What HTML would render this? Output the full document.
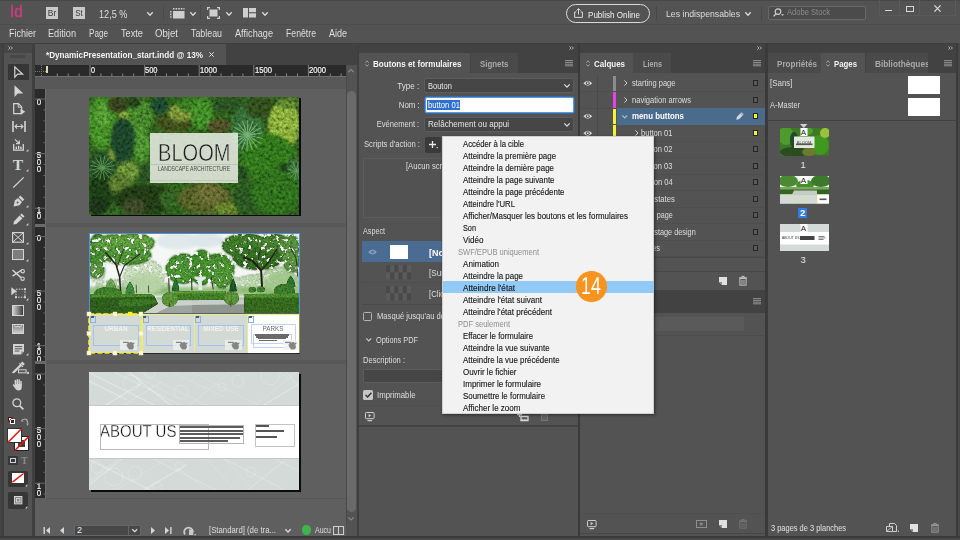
<!DOCTYPE html><html lang="fr"><head><meta charset="utf-8"><title>InDesign</title><style>
html,body{margin:0;padding:0;}
body{width:960px;height:540px;overflow:hidden;background:#535353;position:relative;font-family:"Liberation Sans",sans-serif;}
.a{position:absolute;display:block;box-sizing:border-box;}
.t{white-space:pre;}
svg{overflow:visible;}
</style></head><body>
<div class="a" style="left:0px;top:0px;width:960px;height:540px;background:#535353;"></div>
<div class="a" style="left:0px;top:0px;width:960px;height:1px;background:#474747;"></div>
<div class="a" style="left:0px;top:24px;width:960px;height:1px;background:#4c4c4c;"></div>
<span class="a t" style="top:0.80px;font-size:16px;line-height:22px;color:#d13c7e;transform:scaleX(0.959);transform-origin:left center;left:10.2px;-webkit-text-stroke:0.35px #d13c7e;">Id</span>
<div class="a" style="left:46px;top:7px;width:12px;height:12px;background:#c9c9c9;"></div>
<div class="a t" style="top:7.20px;font-size:8.8px;line-height:12px;color:#3a3a3a;transform:scaleX(0.966);transform-origin:center center;left:-148px;width:400px;text-align:center;"><span>Br</span></div>
<div class="a" style="left:73px;top:7px;width:12px;height:12px;background:#c9c9c9;"></div>
<div class="a t" style="top:7.20px;font-size:8.8px;line-height:12px;color:#3a3a3a;transform:scaleX(0.902);transform-origin:center center;left:-121px;width:400px;text-align:center;"><span>St</span></div>
<span class="a t" style="top:6.50px;font-size:10.5px;line-height:15px;color:#dedede;transform:scaleX(0.871);transform-origin:left center;left:99px;">12,5 %</span>
<svg class="a" style="left:147px;top:11.5px;" width="6" height="3.5" viewBox="0 0 6 3.5"><path d="M0.3 0.3 L3.0 3.2 L5.7 0.3" fill="none" stroke="#dcdcdc" stroke-width="1.3"/></svg>
<div class="a" style="left:163px;top:5px;width:1px;height:15px;background:#4a4a4a;"></div>
<svg class="a" style="left:170px;top:8px;" width="15" height="11" viewBox="0 0 15 11"><rect x="3" y="3" width="11.5" height="7.5" fill="#cfcfcf"/><path d="M3 0.8H14.5" stroke="#cfcfcf" stroke-width="1.4" stroke-dasharray="1.6 1"/><path d="M0.8 3V10.5" stroke="#cfcfcf" stroke-width="1.4" stroke-dasharray="1.6 1"/></svg>
<svg class="a" style="left:190px;top:11.5px;" width="6" height="3.5" viewBox="0 0 6 3.5"><path d="M0.3 0.3 L3.0 3.2 L5.7 0.3" fill="none" stroke="#dcdcdc" stroke-width="1.3"/></svg>
<div class="a" style="left:200px;top:5px;width:1px;height:15px;background:#4a4a4a;"></div>
<svg class="a" style="left:207px;top:7px;" width="13" height="12" viewBox="0 0 13 12"><rect x="2.5" y="2.5" width="8" height="7" fill="#cfcfcf"/><path d="M0.6 3V0.6H3M10 0.6H12.4V3M12.4 9V11.4H10M3 11.4H0.6V9" fill="none" stroke="#cfcfcf" stroke-width="1.2"/></svg>
<svg class="a" style="left:226px;top:11.5px;" width="6" height="3.5" viewBox="0 0 6 3.5"><path d="M0.3 0.3 L3.0 3.2 L5.7 0.3" fill="none" stroke="#dcdcdc" stroke-width="1.3"/></svg>
<svg class="a" style="left:243px;top:8px;" width="13" height="10" viewBox="0 0 13 10"><rect x="0" y="0" width="5" height="9.5" fill="#cfcfcf"/><rect x="6" y="0" width="7" height="4.2" fill="#cfcfcf"/><rect x="6" y="5.3" width="7" height="4.2" fill="#cfcfcf"/></svg>
<svg class="a" style="left:262px;top:11.5px;" width="6" height="3.5" viewBox="0 0 6 3.5"><path d="M0.3 0.3 L3.0 3.2 L5.7 0.3" fill="none" stroke="#dcdcdc" stroke-width="1.3"/></svg>
<div class="a" style="left:566px;top:4px;width:84px;height:19px;border:1px solid #d8d8d8;border-radius:10px;"></div>
<svg class="a" style="left:574px;top:8px;" width="9" height="10" viewBox="0 0 9 10"><path d="M2.3 4H0.6V9.4H8.4V4H6.7" fill="none" stroke="#d8d8d8" stroke-width="1"/><path d="M4.5 6.5V0.8M2.5 2.6L4.5 0.6L6.5 2.6" fill="none" stroke="#d8d8d8" stroke-width="1"/></svg>
<span class="a t" style="top:7.50px;font-size:9.5px;line-height:13px;color:#f0f0f0;transform:scaleX(0.849);transform-origin:left center;left:588px;">Publish Online</span>
<div class="a" style="left:656px;top:6px;width:1px;height:14px;background:#484848;"></div>
<span class="a t" style="top:6.50px;font-size:9.5px;line-height:13px;color:#dedede;transform:scaleX(0.916);transform-origin:left center;left:665.5px;">Les indispensables</span>
<svg class="a" style="left:745px;top:12px;" width="6" height="3.5" viewBox="0 0 6 3.5"><path d="M0.3 0.3 L3.0 3.2 L5.7 0.3" fill="none" stroke="#dcdcdc" stroke-width="1.3"/></svg>
<div class="a" style="left:761px;top:6px;width:1px;height:14px;background:#484848;"></div>
<div class="a" style="left:768px;top:5.5px;width:97.5px;height:14px;background:#4b4b4b;border:1px solid #696969;border-radius:2px;"></div>
<svg class="a" style="left:773px;top:8px;" width="11" height="9" viewBox="0 0 11 9"><circle cx="5" cy="3.6" r="2.8" fill="none" stroke="#d0d0d0" stroke-width="1.2"/><path d="M3 5.8L0.6 8.4" stroke="#d0d0d0" stroke-width="1.3"/><path d="M8 6.2h3l-1.5 1.8z" fill="#d0d0d0"/></svg>
<span class="a t" style="top:6.00px;font-size:9px;line-height:13px;color:#8c8c8c;transform:scaleX(0.842);transform-origin:left center;left:787px;">Adobe Stock</span>
<div class="a" style="left:879px;top:0px;width:1px;height:15px;background:#5a5a5a;"></div>
<div class="a" style="left:899px;top:0px;width:1px;height:15px;background:#5a5a5a;"></div>
<div class="a" style="left:919px;top:0px;width:1px;height:15px;background:#5a5a5a;"></div>
<div class="a" style="left:955px;top:0px;width:1px;height:15px;background:#5a5a5a;"></div>
<div class="a" style="left:879px;top:15px;width:77px;height:1px;background:#5a5a5a;"></div>
<div class="a" style="left:885px;top:9.5px;width:7px;height:1.6px;background:#d8d8d8;"></div>
<div class="a" style="left:905.5px;top:5.5px;width:8px;height:6px;border:1.4px solid #d8d8d8;"></div>
<svg class="a" style="left:934px;top:5px;" width="7" height="7" viewBox="0 0 7 7"><path d="M0.4 0.4L6.6 6.6M6.6 0.4L0.4 6.6" stroke="#d8d8d8" stroke-width="1.3"/></svg>
<span class="a t" style="top:27.00px;font-size:10px;line-height:14px;color:#dedede;transform:scaleX(0.900);transform-origin:left center;left:9px;">Fichier</span>
<span class="a t" style="top:27.00px;font-size:10px;line-height:14px;color:#dedede;transform:scaleX(0.916);transform-origin:left center;left:48px;">Edition</span>
<span class="a t" style="top:27.00px;font-size:10px;line-height:14px;color:#dedede;transform:scaleX(0.813);transform-origin:left center;left:89px;">Page</span>
<span class="a t" style="top:27.00px;font-size:10px;line-height:14px;color:#dedede;transform:scaleX(0.920);transform-origin:left center;left:121px;">Texte</span>
<span class="a t" style="top:27.00px;font-size:10px;line-height:14px;color:#dedede;transform:scaleX(0.962);transform-origin:left center;left:155px;">Objet</span>
<span class="a t" style="top:27.00px;font-size:10px;line-height:14px;color:#dedede;transform:scaleX(0.885);transform-origin:left center;left:191px;">Tableau</span>
<span class="a t" style="top:27.00px;font-size:10px;line-height:14px;color:#dedede;transform:scaleX(0.915);transform-origin:left center;left:235px;">Affichage</span>
<span class="a t" style="top:27.00px;font-size:10px;line-height:14px;color:#dedede;transform:scaleX(0.870);transform-origin:left center;left:286px;">Fenêtre</span>
<span class="a t" style="top:27.00px;font-size:10px;line-height:14px;color:#dedede;transform:scaleX(0.899);transform-origin:left center;left:329px;">Aide</span>
<div class="a" style="left:0px;top:43px;width:960px;height:497px;background:#3f3f3f;"></div>
<div class="a" style="left:0px;top:43px;width:2px;height:497px;background:#444;"></div>
<div class="a" style="left:35px;top:44px;width:321.5px;height:21px;background:#424242;"></div>
<div class="a" style="left:35px;top:44px;width:191px;height:21px;background:#535353;"></div>
<span class="a t" style="top:48.00px;font-size:9.5px;line-height:13px;color:#f2f2f2;font-weight:700;transform:scaleX(0.858);transform-origin:left center;left:46px;">*DynamicPresentation_start.indd @ 13%</span>
<svg class="a" style="left:208.5px;top:51.5px;" width="5" height="5" viewBox="0 0 5 5"><path d="M0.3 0.3L4.7 4.7M4.7 0.3L0.3 4.7" stroke="#e0e0e0" stroke-width="1"/></svg>
<div class="a" style="left:35px;top:65px;width:321.5px;height:472px;background:#5f5f5f;"></div>
<div class="a" style="left:35px;top:77px;width:311px;height:11.5px;background:#585858;"></div>
<div class="a" style="left:35px;top:65px;width:311px;height:12px;background:#2a2a2a;"></div>
<div class="a" style="left:35px;top:76px;width:311px;height:1px;background:#6e6e6e;"></div>
<div class="a" style="left:35px;top:70.5px;width:11px;height:1px;border-top:1px dotted #777;"></div>
<div class="a" style="left:40.5px;top:65px;width:1px;height:11px;border-left:1px dotted #777;"></div>
<div class="a" style="left:46px;top:66px;width:1.5px;height:7px;background:#e6d7ae;"></div>
<svg class="a" style="left:35px;top:65px;" width="311" height="12" viewBox="0 0 311 12"><rect x="21.74" y="8.5" width="1" height="2.5" fill="#8a8a8a"/><rect x="32.66" y="8.5" width="1" height="2.5" fill="#8a8a8a"/><rect x="43.58" y="8.5" width="1" height="2.5" fill="#8a8a8a"/><rect x="54.50" y="0" width="1" height="11" fill="#7d7d7d"/><rect x="65.42" y="8.5" width="1" height="2.5" fill="#8a8a8a"/><rect x="76.34" y="8.5" width="1" height="2.5" fill="#8a8a8a"/><rect x="87.26" y="8.5" width="1" height="2.5" fill="#8a8a8a"/><rect x="98.18" y="8.5" width="1" height="2.5" fill="#8a8a8a"/><rect x="109.10" y="0" width="1" height="11" fill="#7d7d7d"/><rect x="120.02" y="8.5" width="1" height="2.5" fill="#8a8a8a"/><rect x="130.94" y="8.5" width="1" height="2.5" fill="#8a8a8a"/><rect x="141.86" y="8.5" width="1" height="2.5" fill="#8a8a8a"/><rect x="152.78" y="8.5" width="1" height="2.5" fill="#8a8a8a"/><rect x="163.70" y="0" width="1" height="11" fill="#7d7d7d"/><rect x="174.62" y="8.5" width="1" height="2.5" fill="#8a8a8a"/><rect x="185.54" y="8.5" width="1" height="2.5" fill="#8a8a8a"/><rect x="196.46" y="8.5" width="1" height="2.5" fill="#8a8a8a"/><rect x="207.38" y="8.5" width="1" height="2.5" fill="#8a8a8a"/><rect x="218.30" y="0" width="1" height="11" fill="#7d7d7d"/><rect x="229.22" y="8.5" width="1" height="2.5" fill="#8a8a8a"/><rect x="240.14" y="8.5" width="1" height="2.5" fill="#8a8a8a"/><rect x="251.06" y="8.5" width="1" height="2.5" fill="#8a8a8a"/><rect x="261.98" y="8.5" width="1" height="2.5" fill="#8a8a8a"/><rect x="272.90" y="0" width="1" height="11" fill="#7d7d7d"/><rect x="283.82" y="8.5" width="1" height="2.5" fill="#8a8a8a"/><rect x="294.74" y="8.5" width="1" height="2.5" fill="#8a8a8a"/><rect x="305.66" y="8.5" width="1" height="2.5" fill="#8a8a8a"/></svg>
<span class="a t" style="top:64.20px;font-size:8.6px;line-height:12px;color:#f6f6f6;transform:scaleX(0.837);transform-origin:left center;left:90.8px;-webkit-text-stroke:0.2px #f6f6f6;">0</span>
<span class="a t" style="top:64.20px;font-size:8.6px;line-height:12px;color:#f6f6f6;transform:scaleX(0.871);transform-origin:left center;left:145.4px;-webkit-text-stroke:0.2px #f6f6f6;">500</span>
<span class="a t" style="top:64.20px;font-size:8.6px;line-height:12px;color:#f6f6f6;transform:scaleX(0.889);transform-origin:left center;left:200.0px;-webkit-text-stroke:0.2px #f6f6f6;">1000</span>
<span class="a t" style="top:64.20px;font-size:8.6px;line-height:12px;color:#f6f6f6;transform:scaleX(0.889);transform-origin:left center;left:254.60000000000002px;-webkit-text-stroke:0.2px #f6f6f6;">1500</span>
<span class="a t" style="top:64.20px;font-size:8.6px;line-height:12px;color:#f6f6f6;transform:scaleX(0.889);transform-origin:left center;left:309.2px;-webkit-text-stroke:0.2px #f6f6f6;">2000</span>
<div class="a" style="left:346px;top:65px;width:10.5px;height:472px;background:#535353;"></div>
<div class="a" style="left:346px;top:65px;width:1px;height:460px;background:#4a4a4a;"></div>
<svg class="a" style="left:348.3px;top:69px;" width="6" height="3.5" viewBox="0 0 6 3.5"><path d="M0.3 3.2L3 0.5L5.7 3.2" fill="none" stroke="#8a8a8a" stroke-width="1.2"/></svg>
<div class="a" style="left:347px;top:91px;width:8.7px;height:421px;background:#6a6a6a;border-radius:4.5px;"></div>
<svg class="a" style="left:348.3px;top:517px;" width="6" height="3.5" viewBox="0 0 6 3.5"><path d="M0.3 0.3L3 3L5.7 0.3" fill="none" stroke="#8a8a8a" stroke-width="1.2"/></svg>
<div class="a" style="left:35px;top:89px;width:11px;height:135px;background:#2a2a2a;"></div>
<div class="a" style="left:45px;top:89px;width:1px;height:135px;background:#6e6e6e;"></div>
<div class="a t" style="top:97.50px;font-size:8.8px;line-height:8px;color:#f6f6f6;transform:scaleX(0.897);transform-origin:center center;left:-161.2px;width:400px;text-align:center;-webkit-text-stroke:0.2px #f6f6f6;"><span>0</span></div>
<div class="a t" style="top:151.00px;font-size:8.8px;line-height:8px;color:#f6f6f6;transform:scaleX(0.897);transform-origin:center center;left:-161.2px;width:400px;text-align:center;-webkit-text-stroke:0.2px #f6f6f6;"><span>5</span></div>
<div class="a t" style="top:157.80px;font-size:8.8px;line-height:8px;color:#f6f6f6;transform:scaleX(0.897);transform-origin:center center;left:-161.2px;width:400px;text-align:center;-webkit-text-stroke:0.2px #f6f6f6;"><span>0</span></div>
<div class="a t" style="top:164.60px;font-size:8.8px;line-height:8px;color:#f6f6f6;transform:scaleX(0.897);transform-origin:center center;left:-161.2px;width:400px;text-align:center;-webkit-text-stroke:0.2px #f6f6f6;"><span>0</span></div>
<div class="a t" style="top:205.50px;font-size:8.8px;line-height:8px;color:#f6f6f6;transform:scaleX(0.897);transform-origin:center center;left:-161.2px;width:400px;text-align:center;-webkit-text-stroke:0.2px #f6f6f6;"><span>1</span></div>
<div class="a t" style="top:212.30px;font-size:8.8px;line-height:8px;color:#f6f6f6;transform:scaleX(0.897);transform-origin:center center;left:-161.2px;width:400px;text-align:center;-webkit-text-stroke:0.2px #f6f6f6;"><span>0</span></div>
<div class="a" style="left:35px;top:226.5px;width:11px;height:134.5px;background:#2a2a2a;"></div>
<div class="a" style="left:45px;top:226.5px;width:1px;height:134.5px;background:#6e6e6e;"></div>
<div class="a t" style="top:234.00px;font-size:8.8px;line-height:8px;color:#f6f6f6;transform:scaleX(0.897);transform-origin:center center;left:-161.2px;width:400px;text-align:center;-webkit-text-stroke:0.2px #f6f6f6;"><span>0</span></div>
<div class="a t" style="top:289.00px;font-size:8.8px;line-height:8px;color:#f6f6f6;transform:scaleX(0.897);transform-origin:center center;left:-161.2px;width:400px;text-align:center;-webkit-text-stroke:0.2px #f6f6f6;"><span>5</span></div>
<div class="a t" style="top:295.80px;font-size:8.8px;line-height:8px;color:#f6f6f6;transform:scaleX(0.897);transform-origin:center center;left:-161.2px;width:400px;text-align:center;-webkit-text-stroke:0.2px #f6f6f6;"><span>0</span></div>
<div class="a t" style="top:302.60px;font-size:8.8px;line-height:8px;color:#f6f6f6;transform:scaleX(0.897);transform-origin:center center;left:-161.2px;width:400px;text-align:center;-webkit-text-stroke:0.2px #f6f6f6;"><span>0</span></div>
<div class="a t" style="top:341.50px;font-size:8.8px;line-height:8px;color:#f6f6f6;transform:scaleX(0.897);transform-origin:center center;left:-161.2px;width:400px;text-align:center;-webkit-text-stroke:0.2px #f6f6f6;"><span>1</span></div>
<div class="a t" style="top:348.30px;font-size:8.8px;line-height:8px;color:#f6f6f6;transform:scaleX(0.897);transform-origin:center center;left:-161.2px;width:400px;text-align:center;-webkit-text-stroke:0.2px #f6f6f6;"><span>0</span></div>
<div class="a t" style="top:355.10px;font-size:8.8px;line-height:8px;color:#f6f6f6;transform:scaleX(0.897);transform-origin:center center;left:-161.2px;width:400px;text-align:center;-webkit-text-stroke:0.2px #f6f6f6;"><span>0</span></div>
<div class="a" style="left:35px;top:363.5px;width:11px;height:134.5px;background:#2a2a2a;"></div>
<div class="a" style="left:45px;top:363.5px;width:1px;height:134.5px;background:#6e6e6e;"></div>
<div class="a t" style="top:373.00px;font-size:8.8px;line-height:8px;color:#f6f6f6;transform:scaleX(0.897);transform-origin:center center;left:-161.2px;width:400px;text-align:center;-webkit-text-stroke:0.2px #f6f6f6;"><span>0</span></div>
<div class="a t" style="top:426.00px;font-size:8.8px;line-height:8px;color:#f6f6f6;transform:scaleX(0.897);transform-origin:center center;left:-161.2px;width:400px;text-align:center;-webkit-text-stroke:0.2px #f6f6f6;"><span>5</span></div>
<div class="a t" style="top:432.80px;font-size:8.8px;line-height:8px;color:#f6f6f6;transform:scaleX(0.897);transform-origin:center center;left:-161.2px;width:400px;text-align:center;-webkit-text-stroke:0.2px #f6f6f6;"><span>0</span></div>
<div class="a t" style="top:439.60px;font-size:8.8px;line-height:8px;color:#f6f6f6;transform:scaleX(0.897);transform-origin:center center;left:-161.2px;width:400px;text-align:center;-webkit-text-stroke:0.2px #f6f6f6;"><span>0</span></div>
<div class="a t" style="top:481.70px;font-size:8.8px;line-height:8px;color:#f6f6f6;transform:scaleX(0.897);transform-origin:center center;left:-161.2px;width:400px;text-align:center;-webkit-text-stroke:0.2px #f6f6f6;"><span>1</span></div>
<div class="a t" style="top:488.50px;font-size:8.8px;line-height:8px;color:#f6f6f6;transform:scaleX(0.897);transform-origin:center center;left:-161.2px;width:400px;text-align:center;-webkit-text-stroke:0.2px #f6f6f6;"><span>0</span></div>
<svg class="a" style="left:35px;top:65px;" width="11" height="440" viewBox="0 0 11 440"><rect x="0" y="33.50" width="11" height="1" fill="#6a6a6a"/><rect x="8.5" y="44.42" width="2.5" height="1" fill="#6a6a6a"/><rect x="8.5" y="55.34" width="2.5" height="1" fill="#6a6a6a"/><rect x="8.5" y="66.26" width="2.5" height="1" fill="#6a6a6a"/><rect x="8.5" y="77.18" width="2.5" height="1" fill="#6a6a6a"/><rect x="0" y="88.10" width="11" height="1" fill="#6a6a6a"/><rect x="8.5" y="99.02" width="2.5" height="1" fill="#6a6a6a"/><rect x="8.5" y="109.94" width="2.5" height="1" fill="#6a6a6a"/><rect x="8.5" y="120.86" width="2.5" height="1" fill="#6a6a6a"/><rect x="8.5" y="131.78" width="2.5" height="1" fill="#6a6a6a"/><rect x="0" y="142.70" width="11" height="1" fill="#6a6a6a"/><rect x="8.5" y="153.62" width="2.5" height="1" fill="#6a6a6a"/><rect x="0" y="171.00" width="11" height="1" fill="#6a6a6a"/><rect x="8.5" y="181.92" width="2.5" height="1" fill="#6a6a6a"/><rect x="8.5" y="192.84" width="2.5" height="1" fill="#6a6a6a"/><rect x="8.5" y="203.76" width="2.5" height="1" fill="#6a6a6a"/><rect x="8.5" y="214.68" width="2.5" height="1" fill="#6a6a6a"/><rect x="0" y="225.60" width="11" height="1" fill="#6a6a6a"/><rect x="8.5" y="236.52" width="2.5" height="1" fill="#6a6a6a"/><rect x="8.5" y="247.44" width="2.5" height="1" fill="#6a6a6a"/><rect x="8.5" y="258.36" width="2.5" height="1" fill="#6a6a6a"/><rect x="8.5" y="269.28" width="2.5" height="1" fill="#6a6a6a"/><rect x="0" y="280.20" width="11" height="1" fill="#6a6a6a"/><rect x="8.5" y="291.12" width="2.5" height="1" fill="#6a6a6a"/><rect x="0" y="308.50" width="11" height="1" fill="#6a6a6a"/><rect x="8.5" y="319.42" width="2.5" height="1" fill="#6a6a6a"/><rect x="8.5" y="330.34" width="2.5" height="1" fill="#6a6a6a"/><rect x="8.5" y="341.26" width="2.5" height="1" fill="#6a6a6a"/><rect x="8.5" y="352.18" width="2.5" height="1" fill="#6a6a6a"/><rect x="0" y="363.10" width="11" height="1" fill="#6a6a6a"/><rect x="8.5" y="374.02" width="2.5" height="1" fill="#6a6a6a"/><rect x="8.5" y="384.94" width="2.5" height="1" fill="#6a6a6a"/><rect x="8.5" y="395.86" width="2.5" height="1" fill="#6a6a6a"/><rect x="8.5" y="406.78" width="2.5" height="1" fill="#6a6a6a"/><rect x="0" y="417.70" width="11" height="1" fill="#6a6a6a"/><rect x="8.5" y="428.62" width="2.5" height="1" fill="#6a6a6a"/></svg>
<div class="a" style="left:46px;top:223px;width:300px;height:3.5px;background:#585858;"></div>
<div class="a" style="left:46px;top:360px;width:300px;height:3.5px;background:#585858;"></div>
<div class="a" style="left:35px;top:224px;width:11px;height:2.5px;background:#6a6a6a;"></div>
<div class="a" style="left:35px;top:361px;width:11px;height:2.5px;background:#6a6a6a;"></div>
<div class="a" style="left:46px;top:498px;width:300px;height:1px;background:#575757;"></div>
<svg class="a" style="left:45.5px;top:526.5px;" width="4" height="7" viewBox="0 0 4 7"><path d="M4 0L0 3.5L4 7Z" fill="#d6d6d6"/><rect x="-2.5" y="0" width="1.4" height="7" fill="#d6d6d6"/></svg>
<svg class="a" style="left:60px;top:526.5px;" width="4" height="7" viewBox="0 0 4 7"><path d="M4 0L0 3.5L4 7Z" fill="#d6d6d6"/></svg>
<div class="a" style="left:73.5px;top:525px;width:67px;height:11px;background:#484848;border:1px solid #666;"></div>
<div class="a" style="left:128px;top:525px;width:1px;height:11px;background:#666;"></div>
<span class="a t" style="top:524.00px;font-size:9px;line-height:13px;color:#efefef;left:77px;">2</span>
<svg class="a" style="left:131.5px;top:529px;" width="5.5" height="3" viewBox="0 0 5.5 3"><path d="M0.3 0.3 L2.75 2.7 L5.2 0.3" fill="none" stroke="#dcdcdc" stroke-width="1.3"/></svg>
<svg class="a" style="left:151px;top:526.5px;" width="4" height="7" viewBox="0 0 4 7"><path d="M0 0L4 3.5L0 7Z" fill="#d6d6d6"/></svg>
<svg class="a" style="left:164.5px;top:526.5px;" width="4" height="7" viewBox="0 0 4 7"><path d="M0 0L4 3.5L0 7Z" fill="#d6d6d6"/><rect x="5.2" y="0" width="1.4" height="7" fill="#d6d6d6"/></svg>
<svg class="a" style="left:184px;top:525.5px;" width="12" height="10" viewBox="0 0 12 10"><path d="M1 8.5A4.3 4.3 0 1 1 8.8 6" fill="none" stroke="#c9c9c9" stroke-width="1.8"/><rect x="5" y="3.5" width="4.3" height="5.5" fill="#c9c9c9"/><rect x="10.5" y="8" width="1.3" height="1.3" fill="#c9c9c9"/></svg>
<span class="a t" style="top:524.00px;font-size:9.3px;line-height:13px;color:#dedede;transform:scaleX(0.836);transform-origin:left center;left:208.5px;">[Standard] (de tra...</span>
<svg class="a" style="left:285px;top:528.5px;" width="6" height="3.3" viewBox="0 0 6 3.3"><path d="M0.3 0.3 L3.0 3.0 L5.7 0.3" fill="none" stroke="#dcdcdc" stroke-width="1.3"/></svg>
<div class="a" style="left:302px;top:525.3px;width:9.4px;height:9.4px;background:#3fb54a;border-radius:50%;"></div>
<span class="a t" style="top:524.00px;font-size:9.3px;line-height:13px;color:#dedede;transform:scaleX(0.755);transform-origin:left center;left:315px;">Aucu</span>
<div class="a" style="left:332.5px;top:526px;width:11px;height:9px;border:1px solid #cfcfcf;"></div>
<div class="a" style="left:337.5px;top:526px;width:1px;height:9px;background:#cfcfcf;"></div>
<div class="a" style="left:90.6px;top:98.2px;width:210px;height:118px;background:#0a0a0a;"></div>
<svg class="a" style="left:89px;top:96.5px;overflow:hidden;" width="210" height="118" viewBox="0 0 210 118"><defs><filter id="fol" filterUnits="userSpaceOnUse" x="-12" y="-12" width="234" height="142"><feGaussianBlur in="SourceGraphic" stdDeviation="1.7" result="b"/><feTurbulence type="fractalNoise" baseFrequency="0.33" numOctaves="3" seed="7" result="n"/><feColorMatrix in="n" type="matrix" values="1.5 0 0 0 -0.25  1.5 0 0 0 -0.25  1.5 0 0 0 -0.25  0 0 0 0 1" result="g"/><feComposite in="b" in2="g" operator="arithmetic" k1="1.5" k2="0.3" k3="0" k4="0"/></filter></defs><g filter="url(#fol)"><rect x="-12" y="-12" width="234" height="142" fill="#2f5f1e"/><ellipse cx="13.3" cy="26.0" rx="14.7" ry="26.9" fill="#438b26"/><ellipse cx="14.1" cy="18.7" rx="7.3" ry="11.4" fill="#529930"/><ellipse cx="28.4" cy="8.1" rx="10.2" ry="8.1" fill="#353f1f"/><ellipse cx="35.5" cy="43.1" rx="9.1" ry="21.2" fill="#1c442a"/><ellipse cx="50.8" cy="19.1" rx="13.0" ry="16.7" fill="#44842a"/><ellipse cx="34.9" cy="18.7" rx="5.3" ry="4.1" fill="#7a9f37"/><ellipse cx="52.7" cy="48.4" rx="8.1" ry="18.3" fill="#4b8d2f"/><ellipse cx="70.7" cy="8.7" rx="8.6" ry="8.7" fill="#1c462f"/><ellipse cx="84.6" cy="26.0" rx="17.5" ry="9.8" fill="#414f1f"/><ellipse cx="91.5" cy="15.8" rx="12.2" ry="8.6" fill="#789135"/><ellipse cx="99.7" cy="8.1" rx="11.4" ry="7.3" fill="#387924"/><ellipse cx="13.7" cy="69.2" rx="15.1" ry="14.7" fill="#264e26"/><ellipse cx="25.1" cy="57.0" rx="5.3" ry="5.7" fill="#86a63d"/><ellipse cx="39.0" cy="74.1" rx="11.0" ry="9.8" fill="#6a9037"/><ellipse cx="55.4" cy="76.1" rx="5.9" ry="10.2" fill="#295022"/><ellipse cx="112.8" cy="16.2" rx="11.4" ry="16.3" fill="#418926"/><ellipse cx="130.3" cy="28.9" rx="11.8" ry="6.9" fill="#4e4e27"/><ellipse cx="139.7" cy="8.9" rx="17.1" ry="8.1" fill="#2b5121"/><ellipse cx="158.4" cy="33.4" rx="16.3" ry="26.1" fill="#366c34"/><ellipse cx="172.3" cy="10.9" rx="15.5" ry="11.0" fill="#334d1f"/><ellipse cx="195.1" cy="27.6" rx="15.5" ry="23.6" fill="#88aa3b"/><ellipse cx="199.2" cy="6.5" rx="11.4" ry="5.7" fill="#5d832e"/><ellipse cx="179.6" cy="61.5" rx="27.7" ry="24.9" fill="#31761e"/><ellipse cx="200.0" cy="70.8" rx="10.6" ry="4.9" fill="#193a15"/><ellipse cx="204.5" cy="73.3" rx="6.9" ry="12.2" fill="#356834"/><ellipse cx="154.3" cy="77.8" rx="4.9" ry="8.6" fill="#284c21"/><ellipse cx="11.9" cy="95.3" rx="12.6" ry="21.8" fill="#1f3e19"/><ellipse cx="45.1" cy="5.6" rx="6.5" ry="5.7" fill="#253f1f"/><ellipse cx="33.7" cy="43.1" rx="12.2" ry="22.8" fill="#1c442a"/><ellipse cx="31.4" cy="87.2" rx="11.5" ry="11.5" fill="#58782d"/><ellipse cx="56.6" cy="102.1" rx="32.1" ry="14.9" fill="#213b19"/><ellipse cx="82.9" cy="102.1" rx="12.6" ry="10.3" fill="#335e23"/><ellipse cx="116.2" cy="101.6" rx="27.5" ry="15.5" fill="#525e27"/><ellipse cx="120.7" cy="97.6" rx="13.7" ry="10.3" fill="#686a31"/><ellipse cx="139.1" cy="111.9" rx="13.7" ry="6.3" fill="#63802a"/><ellipse cx="157.4" cy="102.1" rx="13.7" ry="14.9" fill="#2b5620"/><ellipse cx="186.6" cy="95.3" rx="24.6" ry="21.8" fill="#2f6e1c"/><ellipse cx="8.5" cy="109.6" rx="9.2" ry="8.6" fill="#1d3216"/><ellipse cx="45.1" cy="109.6" rx="11.5" ry="8.6" fill="#3a4627"/></g><g opacity="0.75"><path d="M13.3 70.8L25.1 73.2" stroke="#6fb464" stroke-width="0.9" stroke-linecap="round"/><path d="M13.3 70.8L23.3 77.5" stroke="#6fb464" stroke-width="0.9" stroke-linecap="round"/><path d="M13.3 70.8L19.9 80.8" stroke="#6fb464" stroke-width="0.9" stroke-linecap="round"/><path d="M13.3 70.8L15.6 82.6" stroke="#6fb464" stroke-width="0.9" stroke-linecap="round"/><path d="M13.3 70.8L10.9 82.6" stroke="#6fb464" stroke-width="0.9" stroke-linecap="round"/><path d="M13.3 70.8L6.6 80.8" stroke="#6fb464" stroke-width="0.9" stroke-linecap="round"/><path d="M13.3 70.8L3.3 77.5" stroke="#6fb464" stroke-width="0.9" stroke-linecap="round"/><path d="M13.3 70.8L1.5 73.1" stroke="#6fb464" stroke-width="0.9" stroke-linecap="round"/><path d="M13.3 70.8L1.5 68.5" stroke="#6fb464" stroke-width="0.9" stroke-linecap="round"/><path d="M13.3 70.8L3.3 64.1" stroke="#6fb464" stroke-width="0.9" stroke-linecap="round"/><path d="M13.3 70.8L6.7 60.8" stroke="#6fb464" stroke-width="0.9" stroke-linecap="round"/><path d="M13.3 70.8L11.0 59.1" stroke="#6fb464" stroke-width="0.9" stroke-linecap="round"/><path d="M13.3 70.8L15.7 59.1" stroke="#6fb464" stroke-width="0.9" stroke-linecap="round"/><path d="M13.3 70.8L20.0 60.9" stroke="#6fb464" stroke-width="0.9" stroke-linecap="round"/><path d="M13.3 70.8L23.3 64.2" stroke="#6fb464" stroke-width="0.9" stroke-linecap="round"/><path d="M13.3 70.8L25.1 68.5" stroke="#6fb464" stroke-width="0.9" stroke-linecap="round"/><path d="M158.4 38.2L173.1 41.2" stroke="#8cc58a" stroke-width="1.1" stroke-linecap="round"/><path d="M158.4 38.2L171.2 46.1" stroke="#8cc58a" stroke-width="1.1" stroke-linecap="round"/><path d="M158.4 38.2L167.8 50.0" stroke="#8cc58a" stroke-width="1.1" stroke-linecap="round"/><path d="M158.4 38.2L163.2 52.5" stroke="#8cc58a" stroke-width="1.1" stroke-linecap="round"/><path d="M158.4 38.2L158.0 53.2" stroke="#8cc58a" stroke-width="1.1" stroke-linecap="round"/><path d="M158.4 38.2L152.9 52.2" stroke="#8cc58a" stroke-width="1.1" stroke-linecap="round"/><path d="M158.4 38.2L148.5 49.5" stroke="#8cc58a" stroke-width="1.1" stroke-linecap="round"/><path d="M158.4 38.2L145.2 45.4" stroke="#8cc58a" stroke-width="1.1" stroke-linecap="round"/><path d="M158.4 38.2L143.6 40.5" stroke="#8cc58a" stroke-width="1.1" stroke-linecap="round"/><path d="M158.4 38.2L143.7 35.3" stroke="#8cc58a" stroke-width="1.1" stroke-linecap="round"/><path d="M158.4 38.2L145.6 30.4" stroke="#8cc58a" stroke-width="1.1" stroke-linecap="round"/><path d="M158.4 38.2L149.1 26.5" stroke="#8cc58a" stroke-width="1.1" stroke-linecap="round"/><path d="M158.4 38.2L153.6 24.0" stroke="#8cc58a" stroke-width="1.1" stroke-linecap="round"/><path d="M158.4 38.2L158.8 23.2" stroke="#8cc58a" stroke-width="1.1" stroke-linecap="round"/><path d="M158.4 38.2L163.9 24.3" stroke="#8cc58a" stroke-width="1.1" stroke-linecap="round"/><path d="M158.4 38.2L168.3 27.0" stroke="#8cc58a" stroke-width="1.1" stroke-linecap="round"/><path d="M158.4 38.2L171.6 31.1" stroke="#8cc58a" stroke-width="1.1" stroke-linecap="round"/><path d="M158.4 38.2L173.2 36.0" stroke="#8cc58a" stroke-width="1.1" stroke-linecap="round"/><path d="M207.3 74.1L216.1 75.9" stroke="#6fb464" stroke-width="0.9" stroke-linecap="round"/><path d="M207.3 74.1L214.0 80.1" stroke="#6fb464" stroke-width="0.9" stroke-linecap="round"/><path d="M207.3 74.1L210.2 82.6" stroke="#6fb464" stroke-width="0.9" stroke-linecap="round"/><path d="M207.3 74.1L205.5 82.9" stroke="#6fb464" stroke-width="0.9" stroke-linecap="round"/><path d="M207.3 74.1L201.3 80.8" stroke="#6fb464" stroke-width="0.9" stroke-linecap="round"/><path d="M207.3 74.1L198.8 77.0" stroke="#6fb464" stroke-width="0.9" stroke-linecap="round"/><path d="M207.3 74.1L198.5 72.3" stroke="#6fb464" stroke-width="0.9" stroke-linecap="round"/><path d="M207.3 74.1L200.6 68.1" stroke="#6fb464" stroke-width="0.9" stroke-linecap="round"/><path d="M207.3 74.1L204.4 65.6" stroke="#6fb464" stroke-width="0.9" stroke-linecap="round"/><path d="M207.3 74.1L209.1 65.3" stroke="#6fb464" stroke-width="0.9" stroke-linecap="round"/><path d="M207.3 74.1L213.3 67.4" stroke="#6fb464" stroke-width="0.9" stroke-linecap="round"/><path d="M207.3 74.1L215.8 71.2" stroke="#6fb464" stroke-width="0.9" stroke-linecap="round"/></g></svg>
<div class="a" style="left:149.5px;top:133px;width:88.5px;height:49.5px;background:rgba(233,237,229,0.87);"></div>
<div class="a" style="left:149.5px;top:164.3px;width:88.5px;height:0.8px;background:rgba(90,90,90,0.16);"></div>
<div class="a" style="left:149.5px;top:180px;width:88.5px;height:0.8px;background:rgba(90,90,90,0.14);"></div>
<span class="a t" style="top:137.40px;font-size:23.5px;line-height:33px;color:#202020;transform:scaleX(0.854);transform-origin:left center;left:157.5px;-webkit-text-stroke:0.4px rgba(233,237,229,0.95);">BLOOM</span>
<span class="a t" style="top:164.10px;font-size:6.6px;line-height:9px;color:#4a4a4a;transform:scaleX(0.774);transform-origin:left center;left:158px;">LANDSCAPE ARCHITECTURE</span>
<svg class="a" style="left:89px;top:233.3px;overflow:hidden;" width="210" height="80.2" viewBox="0 -0.7 210 80.2"><defs><filter id="hol" filterUnits="userSpaceOnUse" x="-12" y="-12" width="234" height="104"><feGaussianBlur in="SourceGraphic" stdDeviation="0.9" result="b"/><feTurbulence type="fractalNoise" baseFrequency="0.22" numOctaves="3" seed="5" result="n"/><feColorMatrix in="n" type="matrix" values="0 0 0 0 0  0 0 0 0 0  0 0 0 0 0  5 0 0 0 -1.45" result="m"/><feComposite in="b" in2="m" operator="in" result="h"/><feTurbulence type="fractalNoise" baseFrequency="0.5" numOctaves="2" seed="9" result="n2"/><feColorMatrix in="n2" type="matrix" values="1.3 0 0 0 -0.15  1.3 0 0 0 -0.15  1.3 0 0 0 -0.15  0 0 0 0 1" result="g"/><feComposite in="h" in2="g" operator="arithmetic" k1="1.3" k2="0.35" k3="0" k4="0"/></filter><filter id="hdg" filterUnits="userSpaceOnUse" x="-12" y="-12" width="234" height="104"><feGaussianBlur in="SourceGraphic" stdDeviation="0.7" result="b"/><feTurbulence type="fractalNoise" baseFrequency="0.55" numOctaves="2" seed="3" result="n2"/><feColorMatrix in="n2" type="matrix" values="1.3 0 0 0 -0.15  1.3 0 0 0 -0.15  1.3 0 0 0 -0.15  0 0 0 0 1" result="g"/><feComposite in="b" in2="g" operator="arithmetic" k1="1.2" k2="0.4" k3="0" k4="0"/></filter><filter id="sft" filterUnits="userSpaceOnUse" x="-12" y="-12" width="234" height="104"><feGaussianBlur stdDeviation="1.6"/></filter></defs><rect width="210" height="80" fill="#f4f7f5"/><g filter="url(#sft)"><ellipse cx="89.1" cy="7.4" rx="22.0" ry="8.1" fill="#dfe8ea" opacity="1"/><ellipse cx="117.7" cy="6.6" rx="17.9" ry="7.3" fill="#dde6e8" opacity="1"/><ellipse cx="169.0" cy="1.7" rx="12.2" ry="2.4" fill="#e6ecee" opacity="1"/></g><g filter="url(#hol)" opacity="0.6"><ellipse cx="8.4" cy="38.4" rx="8.1" ry="11.4" fill="#c3d9b4" opacity="1"/><ellipse cx="54.9" cy="42.4" rx="20.4" ry="17.1" fill="#b3d09d" opacity="1"/><ellipse cx="44.3" cy="53.0" rx="37.5" ry="8.1" fill="#9dc488" opacity="1"/><ellipse cx="177.2" cy="49.8" rx="33.4" ry="9.8" fill="#9bc485" opacity="1"/><ellipse cx="192.6" cy="41.6" rx="17.9" ry="8.1" fill="#8fbc78" opacity="1"/><ellipse cx="139.7" cy="50.6" rx="17.1" ry="7.3" fill="#a7ca93" opacity="1"/></g><g filter="url(#sft)" opacity="0.8"><rect x="-5" y="53" width="220" height="9" fill="#86b56c"/><ellipse cx="55.7" cy="49.8" rx="17.9" ry="11.4" fill="#b4d2a2" opacity="1"/><ellipse cx="193.4" cy="48.2" rx="18.7" ry="9.8" fill="#9cc487" opacity="1"/></g><g filter="url(#hol)"><ellipse cx="8.8" cy="17.6" rx="9.4" ry="17.5" fill="#458a2e" opacity="1"/><ellipse cx="26.3" cy="9.0" rx="19.6" ry="8.1" fill="#5a9d3a" opacity="1"/><ellipse cx="45.9" cy="9.4" rx="19.6" ry="9.4" fill="#5fa03c" opacity="1"/><ellipse cx="38.6" cy="21.7" rx="23.6" ry="9.4" fill="#4f9434" opacity="1"/><ellipse cx="7.6" cy="36.7" rx="7.3" ry="8.1" fill="#5c9a42" opacity="1"/><ellipse cx="94.0" cy="35.1" rx="17.1" ry="14.7" fill="#4a9430" opacity="1"/><ellipse cx="112.8" cy="33.9" rx="11.4" ry="17.5" fill="#3f8c29" opacity="1"/><ellipse cx="129.1" cy="35.1" rx="16.3" ry="14.7" fill="#46912d" opacity="1"/><ellipse cx="134.0" cy="42.4" rx="9.8" ry="12.2" fill="#4f9733" opacity="1"/><ellipse cx="156.4" cy="11.9" rx="23.2" ry="11.8" fill="#3c7a28" opacity="1"/><ellipse cx="169.0" cy="23.3" rx="25.3" ry="12.6" fill="#356e24" opacity="1"/><ellipse cx="182.9" cy="9.4" rx="17.9" ry="9.4" fill="#447f2c" opacity="1"/><ellipse cx="201.2" cy="14.7" rx="10.2" ry="13.9" fill="#558f3a" opacity="1"/><ellipse cx="202.8" cy="27.0" rx="8.6" ry="11.4" fill="#5c9440" opacity="1"/></g><path d="M31.6 58.7L30.6 43.3L27.1 31.0L16.6 18.8" fill="none" stroke="#26241a" stroke-width="1.5" stroke-linecap="round" stroke-linejoin="round"/><path d="M30.6 43.3L35.3 31.9L50.8 20.4" fill="none" stroke="#26241a" stroke-width="1.1" stroke-linecap="round" stroke-linejoin="round"/><path d="M28.0 33.5L34.5 15.6" fill="none" stroke="#2c2a1e" stroke-width="0.8" stroke-linecap="round" stroke-linejoin="round"/><path d="M173.1 53.4L172.1 36.7L163.3 27.0L155.2 23.7" fill="none" stroke="#221f17" stroke-width="2" stroke-linecap="round" stroke-linejoin="round"/><path d="M172.1 36.7L179.6 28.6L187.7 15.6" fill="none" stroke="#221f17" stroke-width="1.3" stroke-linecap="round" stroke-linejoin="round"/><path d="M168.2 31.0L171.4 15.6" fill="none" stroke="#2a261c" stroke-width="0.9" stroke-linecap="round" stroke-linejoin="round"/><path d="M208.6 42.4L207.3 25.3L200.8 12.3" fill="none" stroke="#2d2a1f" stroke-width="0.9" stroke-linecap="round" stroke-linejoin="round"/><path d="M80.1 57.9L79.8 44.9" fill="none" stroke="#2a281c" stroke-width="1" stroke-linecap="round" stroke-linejoin="round"/><path d="M102.9 56.3L102.6 44.9" fill="none" stroke="#2a281c" stroke-width="1" stroke-linecap="round" stroke-linejoin="round"/><path d="M124.2 55.5L122.2 43.3" fill="none" stroke="#2a281c" stroke-width="0.9" stroke-linecap="round" stroke-linejoin="round"/><path d="M47.5 58.7L47.2 51.4" fill="none" stroke="#3a3526" stroke-width="0.8" stroke-linecap="round" stroke-linejoin="round"/><path d="M59.7 58.7L59.4 52.2" fill="none" stroke="#3a3526" stroke-width="0.8" stroke-linecap="round" stroke-linejoin="round"/><path d="M109.2 56.3L109.8 47.8L105.4 44.9L105.4 42.8L116.9 42.8L116.9 44.9L112.8 47.8L113.4 56.3"  fill="#dfe7e7"/><path d="M67.1 63.6L107.0 63.6L107.0 79.4L52.4 79.4"  fill="#cdd1cd"/><path d="M103.0 63.6L156.8 63.6L156.8 79.4L103.0 79.4"  fill="#c9cdc9"/><path d="M81.7 72.3L107.0 71.3L107.0 79.4L67.1 79.4"  fill="#9ea49e"/><path d="M103.0 71.3L156.8 70.6L156.8 79.4L103.0 79.4"  fill="#8f958f"/><path d="M68.7 63.6L107.0 63.6L107.0 66.1L67.1 66.1"  fill="#b9c1b7"/><path d="M103.0 63.6L156.8 63.6L156.8 66.4L103.0 66.4"  fill="#b9c1b7"/><g filter="url(#hdg)"><path d="M16.6 55.5Q16.6 50.0 21.9 44.6Q27.1 50.0 27.1 55.5Z" fill="#6aa252"/><path d="M36.6 59.9Q36.6 53.9 41.0 47.8Q45.4 53.9 45.4 59.9Z" fill="#3c8a3a"/><path d="M83.0 57.6Q83.0 51.2 86.6 44.9Q90.2 51.2 90.2 57.6Z" fill="#2c6e30"/><path d="M140.5 57.6Q140.5 51.1 144.1 44.6Q147.7 51.1 147.7 57.6Z" fill="#1f5626"/><path d="M197.2 53.4Q197.2 47.7 201.8 42.1Q206.3 47.7 206.3 53.4Z" fill="#2f6f2d"/><ellipse cx="19.0" cy="60.5" rx="13.9" ry="7.2" fill="#3f7f2a" opacity="1"/><path d="M-1.4 61.2L6.8 60.4L62.2 60.9L66.3 64.4L68.7 70.2L54.0 79.4L-1.4 79.4"  fill="#2e5e1f"/><path d="M-1.4 60.5L62.2 60.5L66.3 63.1L-1.4 64.1"  fill="#4c8a2c"/><path d="M29.6 66.1L65.4 65.3L68.7 69.3L50.8 72.6L29.6 72.6"  fill="#3a7426"/><path d="M85.0 57.9L109.5 57.9L109.5 66.4L85.0 66.4"  fill="#3f7d25"/><path d="M101.4 57.6L136.4 57.6L136.4 66.4L101.4 66.4"  fill="#3f7d25"/><path d="M85.0 57.6L109.5 57.6L109.5 59.9L85.0 59.9"  fill="#5a9634"/><path d="M101.4 57.3L136.4 57.3L136.4 59.6L101.4 59.6"  fill="#5a9634"/><ellipse cx="80.7" cy="65.7" rx="7.9" ry="7.3" fill="#5c9339" opacity="1"/><ellipse cx="142.4" cy="64.4" rx="7.6" ry="6.8" fill="#5a9138" opacity="1"/><ellipse cx="163.3" cy="56.0" rx="3.6" ry="2.6" fill="#3a7a2a" opacity="1"/><ellipse cx="171.9" cy="55.6" rx="4.0" ry="2.9" fill="#3f7f2c" opacity="1"/><ellipse cx="195.5" cy="57.2" rx="10.5" ry="6.9" fill="#3a7a2a" opacity="1"/><path d="M155.2 61.2L212.2 60.4L212.2 79.4L155.5 79.4"  fill="#35691f"/><path d="M154.8 60.5L212.2 59.9L212.2 63.6L155.2 64.1"  fill="#4f8c2e"/></g><path d="M141.8 72.6L142.1 67.7" fill="none" stroke="#3a3a25" stroke-width="0.8" stroke-linecap="round" stroke-linejoin="round"/><path d="M80.4 72.6L80.4 69.3" fill="none" stroke="#3a3a25" stroke-width="0.8" stroke-linecap="round" stroke-linejoin="round"/></svg>
<div class="a" style="left:88.5px;top:232.8px;width:211px;height:81px;border:1px solid #4f8fe0;border-bottom:none;"></div>
<div class="a" style="left:89px;top:313.5px;width:158px;height:39px;background:#d3d9d4;"></div>
<div class="a" style="left:247px;top:313.5px;width:52px;height:39px;background:#ffffff;"></div>
<div class="a" style="left:89px;top:352.5px;width:210.5px;height:1px;background:#2a2a2a;"></div>
<div class="a" style="left:299px;top:314px;width:1px;height:39px;background:#8a9a40;"></div>
<div class="a" style="left:141.5px;top:313.5px;width:1px;height:39px;background:#e6ee86;"></div>
<div class="a" style="left:193.5px;top:313.5px;width:1px;height:39px;background:#e6ee86;"></div>
<div class="a" style="left:246.5px;top:313.5px;width:1px;height:39px;background:#e6ee86;"></div>
<div class="a" style="left:89px;top:313.5px;width:210px;height:1px;background:#e6ee86;"></div>
<div class="a" style="left:93.2px;top:324.5px;width:45.5px;height:21px;border:1.2px solid #a3c1ee;"></div>
<div class="a" style="left:120.3px;top:340px;width:16.3px;height:10px;background:rgba(236,240,236,0.8);"></div>
<svg class="a" style="left:122px;top:340.6px;" width="14" height="9" viewBox="0 0 14 9"><path d="M1 0.8H6.2L7.4 1.8L8.6 0.9H10.4L10 2.2L12.2 1.4L12.6 2.6L11.4 3.6L12 6.4L10.6 8.6H7.2L5.4 6.2L4.4 3.6L6 3L4.8 2H1Z" fill="#858585"/></svg>
<div class="a t" style="top:323.70px;font-size:6.8px;line-height:10px;color:#f0f3f0;font-weight:700;transform:scaleX(0.945);transform-origin:center center;left:-84.5px;width:400px;text-align:center;"><span>URBAN</span></div>
<div class="a" style="left:90px;top:315.5px;width:6px;height:7px;border:1px solid #8ab0e8;"></div>
<div class="a" style="left:90.8px;top:316.3px;width:2.8px;height:2px;background:#4a5566;"></div>
<div class="a" style="left:145.7px;top:324.5px;width:45.5px;height:21px;border:1.2px solid #a3c1ee;"></div>
<div class="a" style="left:172.8px;top:340px;width:16.3px;height:10px;background:rgba(236,240,236,0.8);"></div>
<svg class="a" style="left:174.5px;top:340.6px;" width="14" height="9" viewBox="0 0 14 9"><path d="M1 0.8H6.2L7.4 1.8L8.6 0.9H10.4L10 2.2L12.2 1.4L12.6 2.6L11.4 3.6L12 6.4L10.6 8.6H7.2L5.4 6.2L4.4 3.6L6 3L4.8 2H1Z" fill="#858585"/></svg>
<div class="a t" style="top:323.70px;font-size:6.8px;line-height:10px;color:#f0f3f0;font-weight:700;transform:scaleX(0.916);transform-origin:center center;left:-32.0px;width:400px;text-align:center;"><span>RESIDENTIAL</span></div>
<div class="a" style="left:142.5px;top:315.5px;width:6px;height:7px;border:1px solid #8ab0e8;"></div>
<div class="a" style="left:143.3px;top:316.3px;width:2.8px;height:2px;background:#4a5566;"></div>
<div class="a" style="left:198.2px;top:324.5px;width:45.5px;height:21px;border:1.2px solid #a3c1ee;"></div>
<div class="a" style="left:225.3px;top:340px;width:16.3px;height:10px;background:rgba(236,240,236,0.8);"></div>
<svg class="a" style="left:227px;top:340.6px;" width="14" height="9" viewBox="0 0 14 9"><path d="M1 0.8H6.2L7.4 1.8L8.6 0.9H10.4L10 2.2L12.2 1.4L12.6 2.6L11.4 3.6L12 6.4L10.6 8.6H7.2L5.4 6.2L4.4 3.6L6 3L4.8 2H1Z" fill="#858585"/></svg>
<div class="a t" style="top:323.70px;font-size:6.8px;line-height:10px;color:#f0f3f0;font-weight:700;transform:scaleX(0.949);transform-origin:center center;left:20.5px;width:400px;text-align:center;"><span>MIXED USE</span></div>
<div class="a" style="left:195px;top:315.5px;width:6px;height:7px;border:1px solid #8ab0e8;"></div>
<div class="a" style="left:195.8px;top:316.3px;width:2.8px;height:2px;background:#4a5566;"></div>
<div class="a" style="left:248px;top:315.5px;width:6px;height:7px;border:1px solid #8ab0e8;"></div>
<div class="a" style="left:248.8px;top:316.3px;width:2.8px;height:2px;background:#4a5566;"></div>
<div class="a" style="left:250.5px;top:324.3px;width:45px;height:20px;border:1px solid #c3d5f3;"></div>
<div class="a" style="left:252.5px;top:334px;width:39px;height:13.5px;border:1px solid #bdd1f2;"></div>
<div class="a t" style="top:324.20px;font-size:6.8px;line-height:10px;color:#666;transform:scaleX(0.931);transform-origin:center center;left:73.39999999999998px;width:400px;text-align:center;"><span>PARKS</span></div>
<div class="a" style="left:254.6px;top:334.3px;width:34.400000000000006px;height:1.5px;background:#6a6a6a;"></div>
<div class="a" style="left:255.9px;top:336.05px;width:31.900000000000006px;height:1.5px;background:#6a6a6a;"></div>
<div class="a" style="left:257.7px;top:337.8px;width:28.80000000000001px;height:1.5px;background:#6a6a6a;"></div>
<div class="a" style="left:259px;top:339.55px;width:18px;height:1.5px;background:#6a6a6a;"></div>
<div class="a" style="left:283px;top:340px;width:15px;height:10px;background:rgba(240,243,240,0.8);"></div>
<svg class="a" style="left:284px;top:341px;" width="14" height="9" viewBox="0 0 14 9"><path d="M1 0.8H6.2L7.4 1.8L8.6 0.9H10.4L10 2.2L12.2 1.4L12.6 2.6L11.4 3.6L12 6.4L10.6 8.6H7.2L5.4 6.2L4.4 3.6L6 3L4.8 2H1Z" fill="#858585"/></svg>
<svg class="a" style="left:88px;top:312.5px;" width="54" height="41" viewBox="0 0 54 41"><rect x="1" y="1" width="52" height="39" fill="none" stroke="#ffee2e" stroke-width="1.6" stroke-dasharray="5 2.2"/><rect x="-1" y="-1" width="4" height="4" fill="#fffff0" stroke="#e8e28a" stroke-width="0.5"/><rect x="25" y="-1" width="4" height="4" fill="#fffff0" stroke="#e8e28a" stroke-width="0.5"/><rect x="51" y="-1" width="4" height="4" fill="#fffff0" stroke="#e8e28a" stroke-width="0.5"/><rect x="-1" y="18.5" width="4" height="4" fill="#fffff0" stroke="#e8e28a" stroke-width="0.5"/><rect x="51" y="18.5" width="4" height="4" fill="#fffff0" stroke="#e8e28a" stroke-width="0.5"/><rect x="-1" y="38" width="4" height="4" fill="#fffff0" stroke="#e8e28a" stroke-width="0.5"/><rect x="25" y="38" width="4" height="4" fill="#fffff0" stroke="#e8e28a" stroke-width="0.5"/><rect x="51" y="38" width="4" height="4" fill="#fffff0" stroke="#e8e28a" stroke-width="0.5"/><rect x="40" y="-1.2" width="4.4" height="4.4" fill="#ffee2e"/></svg>
<div class="a" style="left:90.6px;top:373.7px;width:210px;height:118px;background:#0a0a0a;"></div>
<div class="a" style="left:89px;top:372px;width:210px;height:118px;background:#ffffff;"></div>
<svg class="a" style="left:89px;top:372px;overflow:hidden;" width="210" height="33.5" viewBox="0 0 210 33.5"><rect width="210" height="33.5" fill="#d3dad7"/><path d="M34 33.5l39 -24" stroke="#fff" stroke-width="0.8" opacity="0.32"/><path d="M16 33.5l36 -22" stroke="#fff" stroke-width="1.2" opacity="0.32"/><path d="M191 0l102 82" stroke="#fff" stroke-width="0.5" opacity="0.32"/><path d="M100 33.5l62 -50" stroke="#fff" stroke-width="0.5" opacity="0.32"/><path d="M40 0l115 92" stroke="#fff" stroke-width="1.2" opacity="0.32"/><path d="M166 33.5l102 -82" stroke="#fff" stroke-width="0.5" opacity="0.32"/><path d="M51 0l86 43" stroke="#fff" stroke-width="0.5" opacity="0.32"/><path d="M174 33.5l60 -36" stroke="#fff" stroke-width="1.2" opacity="0.32"/><path d="M37 0l52 26" stroke="#fff" stroke-width="0.5" opacity="0.32"/><path d="M197 0l104 114" stroke="#fff" stroke-width="0.8" opacity="0.32"/><path d="M-18 0l56 28" stroke="#fff" stroke-width="1.2" opacity="0.32"/><path d="M25 0l68 34" stroke="#fff" stroke-width="0.8" opacity="0.32"/><path d="M84 0l51 25" stroke="#fff" stroke-width="0.5" opacity="0.32"/><path d="M-1 0l72 36" stroke="#fff" stroke-width="1.2" opacity="0.32"/><path d="M103 0l72 36" stroke="#fff" stroke-width="0.5" opacity="0.32"/><path d="M209 33.5l48 -29" stroke="#fff" stroke-width="0.5" opacity="0.32"/><circle cx="133" cy="15" r="4" fill="none" stroke="#fff" stroke-width="0.7" opacity="0.3"/><circle cx="92" cy="20" r="7" fill="none" stroke="#fff" stroke-width="0.7" opacity="0.3"/><circle cx="42" cy="11" r="8" fill="none" stroke="#fff" stroke-width="0.7" opacity="0.3"/><circle cx="149" cy="9" r="6" fill="none" stroke="#fff" stroke-width="0.7" opacity="0.3"/><circle cx="181" cy="4" r="9" fill="none" stroke="#fff" stroke-width="0.7" opacity="0.3"/><circle cx="61" cy="1" r="5" fill="none" stroke="#fff" stroke-width="0.7" opacity="0.3"/></svg>
<svg class="a" style="left:89px;top:458.5px;overflow:hidden;" width="210" height="31.5" viewBox="0 0 210 31.5"><rect width="210" height="31.5" fill="#d3dad7"/><path d="M-1 0l117 58" stroke="#fff" stroke-width="1.2" opacity="0.32"/><path d="M135 0l59 30" stroke="#fff" stroke-width="0.8" opacity="0.32"/><path d="M54 31.5l44 -26" stroke="#fff" stroke-width="1.2" opacity="0.32"/><path d="M136 0l37 41" stroke="#fff" stroke-width="0.5" opacity="0.32"/><path d="M186 0l56 28" stroke="#fff" stroke-width="0.8" opacity="0.32"/><path d="M118 0l44 49" stroke="#fff" stroke-width="0.5" opacity="0.32"/><path d="M64 0l71 35" stroke="#fff" stroke-width="0.8" opacity="0.32"/><path d="M209 31.5l81 -49" stroke="#fff" stroke-width="0.5" opacity="0.32"/><path d="M78 0l49 39" stroke="#fff" stroke-width="0.5" opacity="0.32"/><path d="M-7 31.5l45 -36" stroke="#fff" stroke-width="1.2" opacity="0.32"/><path d="M-11 31.5l74 -59" stroke="#fff" stroke-width="0.8" opacity="0.32"/><path d="M209 0l41 45" stroke="#fff" stroke-width="0.8" opacity="0.32"/><path d="M158 31.5l67 -53" stroke="#fff" stroke-width="0.8" opacity="0.32"/><path d="M26 31.5l69 -42" stroke="#fff" stroke-width="0.5" opacity="0.32"/><circle cx="46" cy="14" r="7" fill="none" stroke="#fff" stroke-width="0.7" opacity="0.3"/><circle cx="90" cy="7" r="4" fill="none" stroke="#fff" stroke-width="0.7" opacity="0.3"/><circle cx="8" cy="8" r="6" fill="none" stroke="#fff" stroke-width="0.7" opacity="0.3"/><circle cx="162" cy="13" r="5" fill="none" stroke="#fff" stroke-width="0.7" opacity="0.3"/><circle cx="68" cy="28" r="5" fill="none" stroke="#fff" stroke-width="0.7" opacity="0.3"/><circle cx="25" cy="18" r="9" fill="none" stroke="#fff" stroke-width="0.7" opacity="0.3"/></svg>
<div class="a" style="left:89px;top:405px;width:210px;height:1px;background:#c2c9c6;"></div>
<div class="a" style="left:89px;top:458px;width:210px;height:1px;background:#c2c9c6;"></div>
<span class="a t" style="top:419.50px;font-size:17px;line-height:24px;color:#151515;transform:scaleX(0.883);transform-origin:left center;left:99.5px;-webkit-text-stroke:0.3px #fff;">ABOUT US</span>
<div class="a" style="left:99.5px;top:423.7px;width:109px;height:26.5px;border:1px solid #b9b9b9;"></div>
<div class="a" style="left:179px;top:425px;width:65px;height:19px;border:1px solid #b5b5b5;"></div>
<div class="a" style="left:179.5px;top:426.1px;width:63.5px;height:2.4px;background:#5c5c5c;"></div>
<div class="a" style="left:179.5px;top:429.6px;width:63.5px;height:2.4px;background:#5c5c5c;"></div>
<div class="a" style="left:179.5px;top:433.1px;width:63px;height:2.4px;background:#5c5c5c;"></div>
<div class="a" style="left:179.5px;top:436.6px;width:60px;height:2.4px;background:#5c5c5c;"></div>
<div class="a" style="left:179.5px;top:440.1px;width:48px;height:2.4px;background:#5c5c5c;"></div>
<div class="a" style="left:255px;top:423.7px;width:39.5px;height:23.5px;border:1px solid #c2c2c2;"></div>
<div class="a" style="left:255.5px;top:425.4px;width:13.5px;height:1.6px;background:#555;"></div>
<div class="a" style="left:255.5px;top:430.4px;width:28px;height:1.6px;background:#555;"></div>
<div class="a" style="left:255.5px;top:436.3px;width:21.5px;height:1.6px;background:#555;"></div>
<div class="a" style="left:3.5px;top:44px;width:28.5px;height:492px;background:#535353;"></div>
<div class="a" style="left:3.5px;top:44px;width:28.5px;height:8.5px;background:#474747;"></div>
<svg class="a" style="left:8px;top:45.5px;" width="5" height="4" viewBox="0 0 5 4"><path d="M0.4 0.4L2 2L0.4 3.6M2.8 0.4L4.4 2L2.8 3.6" fill="none" stroke="#c8c8c8" stroke-width="0.8"/></svg>
<div class="a" style="left:9.5px;top:55px;width:15.5px;height:3px;background:#474747;"></div>
<div class="a" style="left:8px;top:64px;width:20.5px;height:15.5px;background:#363636;border-radius:1px;"></div>
<svg class="a" style="left:14px;top:66px;" width="10" height="13" viewBox="0 0 10 13"><path d="M0.8 0.8V11.2L3.6 8.2H8.6Z" fill="none" stroke="#d4d4d4" stroke-width="1.2" stroke-linejoin="miter"/></svg>
<svg class="a" style="left:14px;top:84.5px;" width="10" height="13" viewBox="0 0 10 13"><path d="M0.5 0.3V12L3.8 8.4H9.3Z" fill="#d4d4d4"/></svg>
<svg class="a" style="left:12.5px;top:102.5px;" width="13" height="12" viewBox="0 0 13 12"><path d="M0.7 0.7H5.5L8.7 3.9V10.6H0.7Z" fill="none" stroke="#d4d4d4" stroke-width="1.2"/><path d="M5.2 0.7V4.2H8.7" fill="none" stroke="#d4d4d4" stroke-width="1"/><path d="M7.5 5.8V11.8L12.3 8.8Z" fill="#d4d4d4"/></svg>
<svg class="a" style="left:11.5px;top:120.5px;" width="14" height="11" viewBox="0 0 14 11"><path d="M1 0V11M13 0V11" stroke="#d4d4d4" stroke-width="1.6"/><path d="M3.2 5.5H10.8M5.2 3.3L3 5.5L5.2 7.7M8.8 3.3L11 5.5L8.8 7.7" fill="none" stroke="#d4d4d4" stroke-width="1.1"/></svg>
<svg class="a" style="left:12.5px;top:138.5px;" width="11" height="12" viewBox="0 0 11 12"><path d="M0.7 5V11.2H10.3V5" fill="none" stroke="#d4d4d4" stroke-width="1.3"/><rect x="2.6" y="7.6" width="1.4" height="2.4" fill="#d4d4d4"/><rect x="4.9" y="6.8" width="1.4" height="3.2" fill="#d4d4d4"/><rect x="7.2" y="7.6" width="1.4" height="2.4" fill="#d4d4d4"/><path d="M2 0.4L6 4.4M6.3 1.4V4.7H3" fill="none" stroke="#d4d4d4" stroke-width="1.2"/></svg>
<svg class="a" style="left:25.5px;top:149px;" width="2.4" height="2.4" viewBox="0 0 2.4 2.4"><path d="M2.4 0V2.4H0Z" fill="#d4d4d4"/></svg>
<div class="a t" style="top:153.50px;font-size:15.5px;line-height:22px;color:#d4d4d4;font-weight:700;left:-182px;width:400px;text-align:center;font-family:Liberation Serif,serif;"><span>T</span></div>
<svg class="a" style="left:25.5px;top:168.5px;" width="2.4" height="2.4" viewBox="0 0 2.4 2.4"><path d="M2.4 0V2.4H0Z" fill="#d4d4d4"/></svg>
<svg class="a" style="left:13px;top:177px;" width="11" height="11" viewBox="0 0 11 11"><path d="M0.3 10.5L10.7 0.4" stroke="#d4d4d4" stroke-width="1.2"/></svg>
<svg class="a" style="left:12.5px;top:194.5px;" width="12" height="12" viewBox="0 0 12 12"><path d="M7.3 0.5L11.3 4.5L9.6 6.2L5.6 2.2Z" fill="#d4d4d4"/><path d="M5 3L9 7L6.6 10.2L0.6 11.4L1.8 5.4Z" fill="#d4d4d4"/><circle cx="4.6" cy="7.4" r="1" fill="#535353"/></svg>
<svg class="a" style="left:25.5px;top:205px;" width="2.4" height="2.4" viewBox="0 0 2.4 2.4"><path d="M2.4 0V2.4H0Z" fill="#d4d4d4"/></svg>
<svg class="a" style="left:12.5px;top:212.5px;" width="12" height="12" viewBox="0 0 12 12"><path d="M8.6 0.4L11.5 3.3L10 4.8L7.1 1.9Z" fill="#d4d4d4"/><path d="M6.5 2.6L9.4 5.5L3.4 11L0.4 11.6L0.9 8.4Z" fill="#d4d4d4"/></svg>
<svg class="a" style="left:25.5px;top:222.5px;" width="2.4" height="2.4" viewBox="0 0 2.4 2.4"><path d="M2.4 0V2.4H0Z" fill="#d4d4d4"/></svg>
<svg class="a" style="left:12px;top:231.5px;" width="12" height="11" viewBox="0 0 12 11"><rect x="0.6" y="0.6" width="10.8" height="9.6" fill="none" stroke="#d4d4d4" stroke-width="1.2"/><path d="M0.6 0.6L11.4 10.2M11.4 0.6L0.6 10.2" stroke="#d4d4d4" stroke-width="1"/></svg>
<svg class="a" style="left:25.5px;top:241.5px;" width="2.4" height="2.4" viewBox="0 0 2.4 2.4"><path d="M2.4 0V2.4H0Z" fill="#d4d4d4"/></svg>
<div class="a" style="left:12px;top:249px;width:12px;height:11px;background:#7d7d7d;border:1.2px solid #d4d4d4;"></div>
<svg class="a" style="left:25.5px;top:259px;" width="2.4" height="2.4" viewBox="0 0 2.4 2.4"><path d="M2.4 0V2.4H0Z" fill="#d4d4d4"/></svg>
<svg class="a" style="left:12px;top:268.5px;" width="14" height="12" viewBox="0 0 14 12"><path d="M0.5 1L9 8.6M0.5 7.2L9.6 1" stroke="#d4d4d4" stroke-width="1.5" fill="none"/><circle cx="10.7" cy="2.2" r="1.7" fill="none" stroke="#d4d4d4" stroke-width="1.1"/><circle cx="10.6" cy="9.7" r="1.7" fill="none" stroke="#d4d4d4" stroke-width="1.1"/></svg>
<svg class="a" style="left:11px;top:287px;" width="15" height="12" viewBox="0 0 15 12"><path d="M0.3 0.3V8.2L5.8 4.2Z" fill="#d4d4d4"/><rect x="5" y="2.2" width="9" height="8" fill="none" stroke="#d4d4d4" stroke-width="1" stroke-dasharray="1.6 1.2"/><rect x="4" y="9.2" width="2" height="2" fill="#d4d4d4"/><rect x="13" y="9.2" width="2" height="2" fill="#d4d4d4"/><rect x="13" y="1.2" width="2" height="2" fill="#d4d4d4"/></svg>
<svg class="a" style="left:26px;top:297.5px;" width="2.4" height="2.4" viewBox="0 0 2.4 2.4"><path d="M2.4 0V2.4H0Z" fill="#d4d4d4"/></svg>
<div class="a" style="left:12px;top:305px;width:12px;height:11px;border:1px solid #d4d4d4;background:linear-gradient(90deg,#d0d0d0,#3c3c3c);"></div>
<div class="a" style="left:12px;top:323.7px;width:12px;height:10.5px;border:1px solid #d4d4d4;background:linear-gradient(180deg,#808080,#cfcfcf);"></div>
<svg class="a" style="left:13px;top:325px;" width="10" height="4" viewBox="0 0 10 4"><path d="M1 0.5Q3 3.5 5 1.2Q7 3.5 9 0.5" fill="none" stroke="#ddd" stroke-width="1"/></svg>
<svg class="a" style="left:13px;top:343.7px;" width="11" height="11" viewBox="0 0 11 11"><path d="M0 0H11V7.5L8 10.6H0Z" fill="#d4d4d4"/><path d="M1.8 2.6H9.2M1.8 4.8H9.2M1.8 7H6.5" stroke="#535353" stroke-width="1"/><path d="M8 10.6V7.5H11" fill="#9a9a9a"/></svg>
<svg class="a" style="left:25.5px;top:353px;" width="2.4" height="2.4" viewBox="0 0 2.4 2.4"><path d="M2.4 0V2.4H0Z" fill="#d4d4d4"/></svg>
<svg class="a" style="left:12px;top:361px;" width="17" height="13" viewBox="0 0 17 13"><path d="M10.3 0.5L12.8 3L11 4.8L8.5 2.3Z" fill="#d4d4d4"/><path d="M7.4 2.4L10.9 5.9M8.6 3.6L2 10.2L0.6 12L2.6 11L9.4 4.4" fill="none" stroke="#d4d4d4" stroke-width="1.3"/><rect x="6.5" y="8.8" width="7.5" height="3" fill="none" stroke="#d4d4d4" stroke-width="1"/><path d="M14.5 10.5L16.5 12.5M16.5 10.8V12.6H14.7" stroke="#d4d4d4" stroke-width="0.9" fill="none"/></svg>
<svg class="a" style="left:12px;top:379px;" width="12" height="12" viewBox="0 0 12 12"><path d="M3.4 5.2V1.6M5.3 4.8V0.8M7.2 4.8V1.1M9 5.4V2.4" stroke="#d4d4d4" stroke-width="1.5" stroke-linecap="round" fill="none"/><path d="M2.6 5H9.8V8Q9.8 11.6 6.4 11.6Q4.4 11.6 3.2 9.6L0.8 6.2Q0.6 5.2 1.8 5.4L2.6 6.4Z" fill="#d4d4d4"/></svg>
<svg class="a" style="left:12px;top:397.5px;" width="12" height="12" viewBox="0 0 12 12"><circle cx="4.8" cy="4.8" r="3.9" fill="none" stroke="#d4d4d4" stroke-width="1.3"/><path d="M7.6 7.6L11.4 11.4" stroke="#d4d4d4" stroke-width="1.7"/></svg>
<div class="a" style="left:8px;top:416.5px;width:5px;height:5px;background:#fff;border:0.5px solid #222;"></div>
<div class="a" style="left:10.3px;top:418.8px;width:5px;height:5px;background:#2a2a2a;border:1.2px solid #fff;"></div>
<svg class="a" style="left:8px;top:416.5px;" width="5" height="5" viewBox="0 0 5 5"><path d="M0 5L5 0" stroke="#f00" stroke-width="0.9"/></svg>
<svg class="a" style="left:21px;top:417.5px;" width="8" height="8" viewBox="0 0 8 8"><path d="M1 3.2Q1.4 1 4 1.2Q6.6 1.2 6.6 5.6" fill="none" stroke="#a8a8a8" stroke-width="1.3"/><path d="M0 3.4L2.6 3.6L1 1.2ZM5 5.4H8L6.5 7.8Z" fill="#a8a8a8"/></svg>
<div class="a" style="left:14px;top:435.5px;width:15.3px;height:15.3px;background:#ffffff;border:0.5px solid #222;"></div>
<div class="a" style="left:18px;top:439.5px;width:7.3px;height:7.3px;background:#404040;"></div>
<svg class="a" style="left:14px;top:435.5px;" width="15.3" height="15.3" viewBox="0 0 15.3 15.3"><path d="M0.8 14.5L14.5 0.8" stroke="#f21313" stroke-width="1.6"/></svg>
<div class="a" style="left:7px;top:428px;width:15.3px;height:15.3px;background:#ffffff;border:0.5px solid #333;"></div>
<svg class="a" style="left:7px;top:428px;" width="15.3" height="15.3" viewBox="0 0 15.3 15.3"><path d="M0.8 14.5L14.5 0.8" stroke="#f21313" stroke-width="1.6"/></svg>
<div class="a" style="left:8.3px;top:456.3px;width:9.4px;height:8.8px;background:#383838;"></div>
<div class="a" style="left:10.3px;top:458px;width:5.4px;height:5.4px;border:1px solid #d4d4d4;"></div>
<div class="a t" style="top:454.50px;font-size:9.5px;line-height:13px;color:#8c8c8c;font-weight:700;left:-175.5px;width:400px;text-align:center;font-family:Liberation Serif,serif;"><span>T</span></div>
<div class="a" style="left:8px;top:470.7px;width:20.3px;height:16.2px;background:#363636;border-radius:1.5px;"></div>
<div class="a" style="left:12px;top:473px;width:12px;height:9.6px;background:#fff;"></div>
<svg class="a" style="left:12px;top:473px;" width="12" height="9.6" viewBox="0 0 12 9.6"><path d="M0.5 9.2L11.5 0.5" stroke="#f21313" stroke-width="1.5"/></svg>
<svg class="a" style="left:25px;top:483.5px;" width="2.4" height="2.4" viewBox="0 0 2.4 2.4"><path d="M2.4 0V2.4H0Z" fill="#d4d4d4"/></svg>
<div class="a" style="left:8px;top:492.4px;width:20.3px;height:16.6px;background:#363636;border-radius:1.5px;"></div>
<svg class="a" style="left:14.4px;top:496px;" width="8.4" height="8.4" viewBox="0 0 8.4 8.4"><rect x="0.5" y="0.5" width="7.4" height="7.4" fill="#8a8a8a" stroke="#d4d4d4" stroke-width="1"/><rect x="2.5" y="2.5" width="3.4" height="3.4" fill="none" stroke="#d4d4d4" stroke-width="0.9"/></svg>
<svg class="a" style="left:25px;top:505.5px;" width="2.4" height="2.4" viewBox="0 0 2.4 2.4"><path d="M2.4 0V2.4H0Z" fill="#d4d4d4"/></svg>
<div class="a" style="left:359px;top:44px;width:219px;height:9px;background:#424242;"></div>
<svg class="a" style="left:569px;top:45.5px;" width="5" height="4" viewBox="0 0 5 4"><path d="M0.4 0.4L2 2L0.4 3.6M2.8 0.4L4.4 2L2.8 3.6" fill="none" stroke="#c8c8c8" stroke-width="0.8"/></svg>
<div class="a" style="left:359px;top:53px;width:219px;height:20px;background:#424242;"></div>
<div class="a" style="left:359px;top:53px;width:111px;height:20px;background:#535353;"></div>
<div class="a" style="left:470.5px;top:53px;width:47px;height:19.5px;background:#4a4a4a;"></div>
<svg class="a" style="left:364.5px;top:59.5px;" width="4" height="7" viewBox="0 0 4 7"><path d="M0.4 2.6L2 0.8L3.6 2.6M0.4 4.4L2 6.2L3.6 4.4" fill="none" stroke="#b5b5b5" stroke-width="0.8"/></svg>
<span class="a t" style="top:56.50px;font-size:9.5px;line-height:13px;color:#f4f4f4;font-weight:700;transform:scaleX(0.851);transform-origin:left center;left:372.5px;">Boutons et formulaires</span>
<span class="a t" style="top:56.50px;font-size:9.5px;line-height:13px;color:#a9a9a9;font-weight:700;transform:scaleX(0.831);transform-origin:left center;left:479.5px;">Signets</span>
<svg class="a" style="left:565px;top:59.5px;" width="8" height="6" viewBox="0 0 8 6"><path d="M0 0.6H8M0 2.4H8M0 4.2H8M0 5.8H8" stroke="#9a9a9a" stroke-width="0.9"/></svg>
<div class="a" style="left:359px;top:73px;width:219px;height:352px;background:#535353;"></div>
<div class="a" style="left:359px;top:425px;width:219px;height:1.5px;background:#434343;"></div>
<div class="a" style="left:359px;top:426.5px;width:219px;height:109.5px;background:#535353;"></div>
<span class="a t" style="top:80.00px;font-size:9.3px;line-height:13px;color:#dedede;transform:scaleX(0.869);transform-origin:right center;right:540.5px;">Type :</span>
<div class="a" style="left:424.3px;top:77.5px;width:149.3px;height:15.5px;background:#464646;border:1px solid #5d5d5d;border-radius:2px;"></div>
<span class="a t" style="top:80.00px;font-size:9.3px;line-height:13px;color:#e6e6e6;transform:scaleX(0.808);transform-origin:left center;left:427.5px;">Bouton</span>
<svg class="a" style="left:564px;top:83.8px;" width="6" height="3.4" viewBox="0 0 6 3.4"><path d="M0.3 0.3 L3.0 3.1 L5.7 0.3" fill="none" stroke="#e0e0e0" stroke-width="1.2"/></svg>
<span class="a t" style="top:99.00px;font-size:9.3px;line-height:13px;color:#dedede;transform:scaleX(0.847);transform-origin:right center;right:540.5px;">Nom :</span>
<div class="a" style="left:424.5px;top:97px;width:149px;height:15.5px;background:#ffffff;border:1px solid #4e9af0;border-radius:2px;box-shadow:0 0 0 0.5px #3d7fd6;"></div>
<div class="a" style="left:427px;top:99.5px;width:33px;height:10.5px;background:#2e6fd1;"></div>
<span class="a t" style="top:99.00px;font-size:9.3px;line-height:13px;color:#ffffff;transform:scaleX(0.825);transform-origin:left center;left:427.5px;">button 01</span>
<span class="a t" style="top:118.00px;font-size:9.3px;line-height:13px;color:#dedede;transform:scaleX(0.814);transform-origin:right center;right:540.5px;">Evénement :</span>
<div class="a" style="left:424.3px;top:116.5px;width:149.3px;height:15.5px;background:#464646;border:1px solid #5d5d5d;border-radius:2px;"></div>
<span class="a t" style="top:118.00px;font-size:9.3px;line-height:13px;color:#e6e6e6;transform:scaleX(0.871);transform-origin:left center;left:427.5px;">Relâchement ou appui</span>
<svg class="a" style="left:564px;top:122.8px;" width="6" height="3.4" viewBox="0 0 6 3.4"><path d="M0.3 0.3 L3.0 3.1 L5.7 0.3" fill="none" stroke="#e0e0e0" stroke-width="1.2"/></svg>
<span class="a t" style="top:138.00px;font-size:9.3px;line-height:13px;color:#dedede;transform:scaleX(0.824);transform-origin:left center;left:363.5px;">Scripts d'action :</span>
<div class="a" style="left:425px;top:137px;width:15.5px;height:15.5px;background:#3a3a3a;border-radius:2px;"></div>
<svg class="a" style="left:429px;top:141px;" width="9" height="8" viewBox="0 0 9 8"><path d="M3.5 0V7M0 3.5H7" stroke="#e8e8e8" stroke-width="1.3"/><rect x="7.6" y="6" width="1.2" height="1.2" fill="#e8e8e8"/></svg>
<div class="a" style="left:362.5px;top:157.5px;width:211px;height:60px;background:#525252;border:1px solid #5b5b5b;"></div>
<span class="a t" style="top:160.00px;font-size:9.3px;line-height:13px;color:#dedede;transform:scaleX(0.822);transform-origin:left center;left:405.5px;">[Aucun scri</span>
<span class="a t" style="top:225.00px;font-size:9.3px;line-height:13px;color:#dedede;transform:scaleX(0.774);transform-origin:left center;left:363px;">Aspect</span>
<div class="a" style="left:362px;top:241.3px;width:213px;height:21.2px;background:#4b6c92;"></div>
<svg class="a" style="left:367.5px;top:248.7px;" width="9" height="6" viewBox="0 0 9 6"><path d="M0.2 3Q4.5 -2 8.8 3Q4.5 8 0.2 3Z" fill="#8fa4bf"/><ellipse cx="4.5" cy="3" rx="2.1" ry="1.5" fill="#627b9b"/></svg>
<div class="a" style="left:389.5px;top:245px;width:18.5px;height:13.5px;background:#ffffff;"></div>
<span class="a t" style="top:246.00px;font-size:9.5px;line-height:13px;color:#fff;font-weight:700;transform:scaleX(0.948);transform-origin:left center;left:428.5px;">[No</span>
<div class="a" style="left:362px;top:282px;width:213px;height:1px;background:#4e4e4e;"></div>
<div class="a" style="left:362px;top:304px;width:213px;height:1px;background:#4a4a4a;"></div>
<svg class="a" style="left:386.1px;top:265.3px;" width="25" height="14.5" viewBox="0 0 25 14.5"><rect width="25" height="14.5" fill="#5b5b5b"/><rect x="0.00" y="0.00" width="4.17" height="7.25" fill="#494949"/><rect x="8.34" y="0.00" width="4.17" height="7.25" fill="#494949"/><rect x="16.68" y="0.00" width="4.17" height="7.25" fill="#494949"/><rect x="4.17" y="7.25" width="4.17" height="7.25" fill="#494949"/><rect x="12.51" y="7.25" width="4.17" height="7.25" fill="#494949"/><rect x="20.85" y="7.25" width="4.17" height="7.25" fill="#494949"/></svg>
<svg class="a" style="left:386.1px;top:286.2px;" width="25" height="14.5" viewBox="0 0 25 14.5"><rect width="25" height="14.5" fill="#5b5b5b"/><rect x="0.00" y="0.00" width="4.17" height="7.25" fill="#494949"/><rect x="8.34" y="0.00" width="4.17" height="7.25" fill="#494949"/><rect x="16.68" y="0.00" width="4.17" height="7.25" fill="#494949"/><rect x="4.17" y="7.25" width="4.17" height="7.25" fill="#494949"/><rect x="12.51" y="7.25" width="4.17" height="7.25" fill="#494949"/><rect x="20.85" y="7.25" width="4.17" height="7.25" fill="#494949"/></svg>
<span class="a t" style="top:267.00px;font-size:9.3px;line-height:13px;color:#dedede;transform:scaleX(0.879);transform-origin:left center;left:428.5px;">[Sur</span>
<span class="a t" style="top:288.00px;font-size:9.3px;line-height:13px;color:#dedede;transform:scaleX(0.830);transform-origin:left center;left:428.5px;">[Clic</span>
<div class="a" style="left:363px;top:311.5px;width:9px;height:9px;border:1px solid #b4b4b4;border-radius:1.5px;"></div>
<span class="a t" style="top:310.20px;font-size:9.3px;line-height:13px;color:#dedede;transform:scaleX(0.820);transform-origin:left center;left:377px;">Masqué jusqu'au dé</span>
<svg class="a" style="left:366px;top:338px;" width="5.5" height="3.2" viewBox="0 0 5.5 3.2"><path d="M0.3 0.3 L2.75 2.9000000000000004 L5.2 0.3" fill="none" stroke="#cfcfcf" stroke-width="1.1"/></svg>
<span class="a t" style="top:334.20px;font-size:9.3px;line-height:13px;color:#dedede;transform:scaleX(0.789);transform-origin:left center;left:376px;">Options PDF</span>
<span class="a t" style="top:353.80px;font-size:9.3px;line-height:13px;color:#dedede;transform:scaleX(0.813);transform-origin:left center;left:363px;">Description :</span>
<div class="a" style="left:362.5px;top:368.7px;width:211px;height:14.5px;background:#464646;border:1px solid #5d5d5d;border-radius:2px;"></div>
<div class="a" style="left:363px;top:390px;width:9.5px;height:9.5px;background:#c6c6c6;border-radius:1.5px;"></div>
<svg class="a" style="left:364.5px;top:392px;" width="7" height="6" viewBox="0 0 7 6"><path d="M0.6 3L2.6 5L6.4 0.8" fill="none" stroke="#333" stroke-width="1.4"/></svg>
<span class="a t" style="top:388.50px;font-size:9.3px;line-height:13px;color:#dedede;transform:scaleX(0.837);transform-origin:left center;left:377px;">Imprimable</span>
<div class="a" style="left:359px;top:404.5px;width:219px;height:1px;background:#505050;"></div>
<svg class="a" style="left:364.5px;top:412px;" width="10" height="9.5" viewBox="0 0 10 9.5"><rect x="0.5" y="0.5" width="8.6" height="6.2" rx="0.8" fill="none" stroke="#cfcfcf" stroke-width="1"/><path d="M3.6 2L6.3 3.6L3.6 5.2Z" fill="#cfcfcf"/><path d="M2.5 8.6H7.1" stroke="#cfcfcf" stroke-width="1.2"/></svg>
<svg class="a" style="left:517px;top:411.5px;" width="12" height="9" viewBox="0 0 12 9"><path d="M0 2.5H5M2.5 0V5M4 4.5H11V8.5H4Z" fill="none" stroke="#d8d8d8" stroke-width="1.3"/><path d="M5 8H10" stroke="#d8d8d8" stroke-width="1.6" stroke-dasharray="1.4 0.8"/></svg>
<div class="a" style="left:541.2px;top:413.5px;width:6.8px;height:7.3px;background:#626262;border:1px solid #767676;"></div>
<div class="a" style="left:578px;top:43px;width:2.3px;height:497px;background:#3a3a3a;"></div>
<div class="a" style="left:580px;top:44px;width:185px;height:9px;background:#424242;"></div>
<svg class="a" style="left:756.5px;top:45.5px;" width="5" height="4" viewBox="0 0 5 4"><path d="M0.4 0.4L2 2L0.4 3.6M2.8 0.4L4.4 2L2.8 3.6" fill="none" stroke="#c8c8c8" stroke-width="0.8"/></svg>
<div class="a" style="left:580px;top:53px;width:185px;height:20px;background:#424242;"></div>
<div class="a" style="left:580px;top:53px;width:52.5px;height:20px;background:#535353;"></div>
<div class="a" style="left:633px;top:53px;width:38px;height:19.5px;background:#4a4a4a;"></div>
<svg class="a" style="left:585.5px;top:59.5px;" width="4" height="7" viewBox="0 0 4 7"><path d="M0.4 2.6L2 0.8L3.6 2.6M0.4 4.4L2 6.2L3.6 4.4" fill="none" stroke="#b5b5b5" stroke-width="0.8"/></svg>
<span class="a t" style="top:56.50px;font-size:9.5px;line-height:13px;color:#f4f4f4;font-weight:700;transform:scaleX(0.839);transform-origin:left center;left:593.5px;">Calques</span>
<span class="a t" style="top:56.50px;font-size:9.5px;line-height:13px;color:#a9a9a9;font-weight:700;transform:scaleX(0.766);transform-origin:left center;left:642.5px;">Liens</span>
<svg class="a" style="left:752.5px;top:59.5px;" width="8" height="6" viewBox="0 0 8 6"><path d="M0 0.6H8M0 2.4H8M0 4.2H8M0 5.8H8" stroke="#9a9a9a" stroke-width="0.9"/></svg>
<div class="a" style="left:580px;top:73px;width:185px;height:216.5px;background:#535353;"></div>
<div class="a" style="left:596.5px;top:75px;width:1px;height:181.5px;background:#4a4a4a;"></div>
<div class="a" style="left:612.5px;top:75px;width:1px;height:181.5px;background:#4a4a4a;"></div>
<div class="a" style="left:580px;top:91.0px;width:185px;height:1px;background:#4e4e4e;"></div>
<div class="a" style="left:613.3px;top:75.5px;width:3px;height:15.5px;background:#8c8c8c;"></div>
<svg class="a" style="left:583px;top:80.0px;" width="9.6" height="6.4" viewBox="0 0 9.6 6.4"><path d="M0.4 3.2Q4.8 -1.8 9.2 3.2Q4.8 8.2 0.4 3.2Z" fill="#d9d9d9"/><circle cx="4.8" cy="3.2" r="1.9" fill="#535353"/><circle cx="4.8" cy="3.2" r="0.9" fill="#d9d9d9"/></svg>
<svg class="a" style="left:624px;top:80.45px;" width="3.5" height="6" viewBox="0 0 3.5 6"><path d="M0.4 0.4L3 3L0.4 5.6" fill="none" stroke="#cfcfcf" stroke-width="1"/></svg>
<span class="a t" style="top:77.00px;font-size:9.3px;line-height:13px;color:#dedede;transform:scaleX(0.809);transform-origin:left center;left:631.5px;">starting page</span>
<div class="a" style="left:752.7px;top:80.45px;width:5.6px;height:5.6px;background:#5a5a5a;border:1px solid #262626;"></div>
<div class="a" style="left:580px;top:107.5px;width:185px;height:1px;background:#4e4e4e;"></div>
<div class="a" style="left:613.3px;top:92.0px;width:3px;height:15.5px;background:#e643e6;"></div>
<svg class="a" style="left:624px;top:96.95px;" width="3.5" height="6" viewBox="0 0 3.5 6"><path d="M0.4 0.4L3 3L0.4 5.6" fill="none" stroke="#cfcfcf" stroke-width="1"/></svg>
<span class="a t" style="top:94.00px;font-size:9.3px;line-height:13px;color:#dedede;transform:scaleX(0.810);transform-origin:left center;left:631.5px;">navigation arrows</span>
<div class="a" style="left:752.7px;top:96.95px;width:5.6px;height:5.6px;background:#5a5a5a;border:1px solid #262626;"></div>
<div class="a" style="left:616.5px;top:108.0px;width:148.5px;height:16.5px;background:#4b6b8c;"></div>
<div class="a" style="left:613.3px;top:108.5px;width:3px;height:15.5px;background:#f4f436;"></div>
<svg class="a" style="left:583px;top:113.0px;" width="9.6" height="6.4" viewBox="0 0 9.6 6.4"><path d="M0.4 3.2Q4.8 -1.8 9.2 3.2Q4.8 8.2 0.4 3.2Z" fill="#d9d9d9"/><circle cx="4.8" cy="3.2" r="1.9" fill="#535353"/><circle cx="4.8" cy="3.2" r="0.9" fill="#d9d9d9"/></svg>
<svg class="a" style="left:621.5px;top:114.95px;" width="5.5" height="3.2" viewBox="0 0 5.5 3.2"><path d="M0.3 0.3 L2.75 2.9000000000000004 L5.2 0.3" fill="none" stroke="#a9c0d8" stroke-width="1.1"/></svg>
<span class="a t" style="top:109.00px;font-size:9.5px;line-height:13px;color:#ffffff;font-weight:700;transform:scaleX(0.828);transform-origin:left center;left:631.5px;">menu buttons</span>
<div class="a" style="left:752.7px;top:113.45px;width:5.6px;height:5.6px;background:#f4f436;border:1px solid #262626;"></div>
<div class="a" style="left:580px;top:140.5px;width:185px;height:1px;background:#4e4e4e;"></div>
<div class="a" style="left:613.3px;top:125.0px;width:3px;height:15.5px;background:#f4f436;"></div>
<svg class="a" style="left:583px;top:129.5px;" width="9.6" height="6.4" viewBox="0 0 9.6 6.4"><path d="M0.4 3.2Q4.8 -1.8 9.2 3.2Q4.8 8.2 0.4 3.2Z" fill="#d9d9d9"/><circle cx="4.8" cy="3.2" r="1.9" fill="#535353"/><circle cx="4.8" cy="3.2" r="0.9" fill="#d9d9d9"/></svg>
<svg class="a" style="left:634.5px;top:129.95px;" width="3.5" height="6" viewBox="0 0 3.5 6"><path d="M0.4 0.4L3 3L0.4 5.6" fill="none" stroke="#cfcfcf" stroke-width="1"/></svg>
<span class="a t" style="top:127.00px;font-size:9.3px;line-height:13px;color:#dedede;transform:scaleX(0.812);transform-origin:left center;left:640.5px;">button 01</span>
<div class="a" style="left:752.7px;top:129.95px;width:5.6px;height:5.6px;background:#f4f436;border:1px solid #262626;"></div>
<div class="a" style="left:580px;top:157.0px;width:185px;height:1px;background:#4e4e4e;"></div>
<div class="a" style="left:613.3px;top:141.5px;width:3px;height:15.5px;background:#f4f436;"></div>
<svg class="a" style="left:634.5px;top:146.45px;" width="3.5" height="6" viewBox="0 0 3.5 6"><path d="M0.4 0.4L3 3L0.4 5.6" fill="none" stroke="#cfcfcf" stroke-width="1"/></svg>
<span class="a t" style="top:143.00px;font-size:9.3px;line-height:13px;color:#dedede;transform:scaleX(0.812);transform-origin:left center;left:640.5px;">button 02</span>
<div class="a" style="left:752.7px;top:146.45px;width:5.6px;height:5.6px;background:#5a5a5a;border:1px solid #262626;"></div>
<div class="a" style="left:580px;top:173.5px;width:185px;height:1px;background:#4e4e4e;"></div>
<div class="a" style="left:613.3px;top:158.0px;width:3px;height:15.5px;background:#f4f436;"></div>
<svg class="a" style="left:634.5px;top:162.95px;" width="3.5" height="6" viewBox="0 0 3.5 6"><path d="M0.4 0.4L3 3L0.4 5.6" fill="none" stroke="#cfcfcf" stroke-width="1"/></svg>
<span class="a t" style="top:160.00px;font-size:9.3px;line-height:13px;color:#dedede;transform:scaleX(0.812);transform-origin:left center;left:640.5px;">button 03</span>
<div class="a" style="left:752.7px;top:162.95px;width:5.6px;height:5.6px;background:#5a5a5a;border:1px solid #262626;"></div>
<div class="a" style="left:580px;top:190.0px;width:185px;height:1px;background:#4e4e4e;"></div>
<div class="a" style="left:613.3px;top:174.5px;width:3px;height:15.5px;background:#f4f436;"></div>
<svg class="a" style="left:634.5px;top:179.45px;" width="3.5" height="6" viewBox="0 0 3.5 6"><path d="M0.4 0.4L3 3L0.4 5.6" fill="none" stroke="#cfcfcf" stroke-width="1"/></svg>
<span class="a t" style="top:176.00px;font-size:9.3px;line-height:13px;color:#dedede;transform:scaleX(0.820);transform-origin:left center;left:640.5px;">button 04</span>
<div class="a" style="left:752.7px;top:179.45px;width:5.6px;height:5.6px;background:#5a5a5a;border:1px solid #262626;"></div>
<div class="a" style="left:580px;top:206.5px;width:185px;height:1px;background:#4e4e4e;"></div>
<div class="a" style="left:613.3px;top:191.0px;width:3px;height:15.5px;background:#f4f436;"></div>
<span class="a t" style="top:193.00px;font-size:9.3px;line-height:13px;color:#dedede;transform:scaleX(0.826);transform-origin:right center;right:285.6px;">states</span>
<div class="a" style="left:752.7px;top:195.95px;width:5.6px;height:5.6px;background:#5a5a5a;border:1px solid #262626;"></div>
<div class="a" style="left:580px;top:223.0px;width:185px;height:1px;background:#4e4e4e;"></div>
<div class="a" style="left:613.3px;top:207.5px;width:3px;height:15.5px;background:#f4f436;"></div>
<span class="a t" style="top:209.00px;font-size:9.3px;line-height:13px;color:#dedede;transform:scaleX(0.773);transform-origin:right center;right:287.1px;">page</span>
<div class="a" style="left:752.7px;top:212.45px;width:5.6px;height:5.6px;background:#5a5a5a;border:1px solid #262626;"></div>
<div class="a" style="left:580px;top:239.5px;width:185px;height:1px;background:#4e4e4e;"></div>
<div class="a" style="left:613.3px;top:224.0px;width:3px;height:15.5px;background:#f4f436;"></div>
<span class="a t" style="top:226.00px;font-size:9.3px;line-height:13px;color:#dedede;transform:scaleX(0.787);transform-origin:right center;right:264.5px;">stage design</span>
<div class="a" style="left:752.7px;top:228.95px;width:5.6px;height:5.6px;background:#5a5a5a;border:1px solid #262626;"></div>
<div class="a" style="left:580px;top:256.0px;width:185px;height:1px;background:#4e4e4e;"></div>
<div class="a" style="left:613.3px;top:240.5px;width:3px;height:15.5px;background:#f4f436;"></div>
<span class="a t" style="top:242.00px;font-size:9.3px;line-height:13px;color:#dedede;transform:scaleX(0.800);transform-origin:right center;right:299.6px;">images</span>
<div class="a" style="left:752.7px;top:245.45px;width:5.6px;height:5.6px;background:#5a5a5a;border:1px solid #262626;"></div>
<svg class="a" style="left:735.5px;top:112px;" width="8" height="8" viewBox="0 0 8 8"><path d="M5.4 0.3L7.7 2.6L3 7.3L0.3 7.8L0.8 5Z" fill="#cfd8e2"/><path d="M4.6 1.2L6.8 3.4" stroke="#4b6b8c" stroke-width="0.7"/></svg>
<div class="a" style="left:580px;top:256.5px;width:185px;height:1px;background:#484848;"></div>
<div class="a" style="left:580px;top:271px;width:185px;height:1px;background:#484848;"></div>
<svg class="a" style="left:719px;top:276.5px;" width="8" height="8" viewBox="0 0 8 8"><path d="M0 0H8V8H3L0 5Z" fill="#e0e0e0"/><path d="M0 5H3V8" fill="#8a8a8a"/></svg>
<svg class="a" style="left:739px;top:275.8px;" width="8" height="9.5" viewBox="0 0 8 9.5"><path d="M0 1.8H8M2.8 1.6V0.4H5.2V1.6" fill="none" stroke="#d0d0d0" stroke-width="0.9"/><rect x="0.9" y="2.6" width="6.2" height="6.5" fill="none" stroke="#d0d0d0" stroke-width="0.9"/><path d="M3 4V8M5 4V8" stroke="#d0d0d0" stroke-width="0.8"/></svg>
<div class="a" style="left:580px;top:289.5px;width:185px;height:23px;background:#424242;"></div>
<svg class="a" style="left:752.5px;top:298px;" width="8" height="6" viewBox="0 0 8 6"><path d="M0 0.6H8M0 2.4H8M0 4.2H8M0 5.8H8" stroke="#9a9a9a" stroke-width="0.9"/></svg>
<div class="a" style="left:580px;top:312.5px;width:185px;height:223.5px;background:#535353;"></div>
<div class="a" style="left:655px;top:316.5px;width:89px;height:14.5px;background:#5a5a5a;"></div>
<div class="a" style="left:580px;top:334.5px;width:185px;height:1px;background:#4d4d4d;"></div>
<div class="a" style="left:580px;top:513px;width:185px;height:1px;background:#4f4f4f;"></div>
<svg class="a" style="left:586.5px;top:519.5px;" width="10" height="9.5" viewBox="0 0 10 9.5"><rect x="0.5" y="0.5" width="8.6" height="6.2" rx="0.8" fill="none" stroke="#cfcfcf" stroke-width="1"/><path d="M3.6 2L6.3 3.6L3.6 5.2Z" fill="#cfcfcf"/><path d="M2.5 8.6H7.1" stroke="#cfcfcf" stroke-width="1.2"/></svg>
<div class="a" style="left:696px;top:519.5px;width:10.5px;height:8px;border:1px solid #8f8f8f;"></div>
<div class="a t" style="top:519.80px;font-size:6px;line-height:8px;color:#8f8f8f;left:501.20000000000005px;width:400px;text-align:center;font-family:DejaVu Sans,sans-serif;"><span>★</span></div>
<svg class="a" style="left:718.5px;top:519.5px;" width="8" height="8" viewBox="0 0 8 8"><path d="M0 0H8V8H3L0 5Z" fill="#e0e0e0"/><path d="M0 5H3V8" fill="#8a8a8a"/></svg>
<svg class="a" style="left:738.5px;top:519px;" width="8" height="9.5" viewBox="0 0 8 9.5"><path d="M0 1.8H8M2.8 1.6V0.4H5.2V1.6" fill="none" stroke="#777" stroke-width="0.9"/><rect x="0.9" y="2.6" width="6.2" height="6.5" fill="none" stroke="#777" stroke-width="0.9"/><path d="M3 4V8M5 4V8" stroke="#777" stroke-width="0.8"/></svg>
<div class="a" style="left:580px;top:533px;width:185px;height:1px;background:#474747;"></div>
<div class="a" style="left:765px;top:43px;width:3px;height:497px;background:#3a3a3a;"></div>
<div class="a" style="left:768px;top:44px;width:188px;height:9px;background:#424242;"></div>
<svg class="a" style="left:947.5px;top:45.5px;" width="5" height="4" viewBox="0 0 5 4"><path d="M0.4 0.4L2 2L0.4 3.6M2.8 0.4L4.4 2L2.8 3.6" fill="none" stroke="#c8c8c8" stroke-width="0.8"/></svg>
<div class="a" style="left:768px;top:53px;width:188px;height:20px;background:#424242;"></div>
<div class="a" style="left:768px;top:53px;width:53px;height:19.5px;background:#4a4a4a;"></div>
<div class="a" style="left:821px;top:53px;width:44px;height:20px;background:#535353;"></div>
<div class="a" style="left:865.5px;top:53px;width:62px;height:19.5px;background:#4a4a4a;"></div>
<span class="a t" style="top:56.50px;font-size:9.5px;line-height:13px;color:#a9a9a9;font-weight:700;transform:scaleX(0.851);transform-origin:left center;left:777px;">Propriétés</span>
<svg class="a" style="left:826px;top:59.5px;" width="4" height="7" viewBox="0 0 4 7"><path d="M0.4 2.6L2 0.8L3.6 2.6M0.4 4.4L2 6.2L3.6 4.4" fill="none" stroke="#b5b5b5" stroke-width="0.8"/></svg>
<span class="a t" style="top:56.50px;font-size:9.5px;line-height:13px;color:#f4f4f4;font-weight:700;transform:scaleX(0.821);transform-origin:left center;left:834px;">Pages</span>
<span class="a t" style="top:56.50px;font-size:9.5px;line-height:13px;color:#a9a9a9;font-weight:700;transform:scaleX(0.869);transform-origin:left center;left:875px;">Bibliothèque</span>
<span class="a t" style="top:56.50px;font-size:9.5px;line-height:13px;color:#a9a9a9;font-weight:700;left:925px;width:2.5px;overflow:hidden;">s</span>
<svg class="a" style="left:944px;top:59.5px;" width="8" height="6" viewBox="0 0 8 6"><path d="M0 0.6H8M0 2.4H8M0 4.2H8M0 5.8H8" stroke="#9a9a9a" stroke-width="0.9"/></svg>
<div class="a" style="left:768px;top:73px;width:188px;height:462.5px;background:#535353;"></div>
<div class="a" style="left:956px;top:43px;width:2.3px;height:497px;background:#3a3a3a;"></div>
<div class="a" style="left:958.3px;top:43px;width:1.7px;height:497px;background:#484848;"></div>
<span class="a t" style="top:77.20px;font-size:9.3px;line-height:13px;color:#dedede;transform:scaleX(0.854);transform-origin:left center;left:770px;">[Sans]</span>
<div class="a" style="left:908px;top:76px;width:32px;height:17.5px;background:#ffffff;"></div>
<span class="a t" style="top:99.00px;font-size:9.3px;line-height:13px;color:#dedede;transform:scaleX(0.795);transform-origin:left center;left:770px;">A-Master</span>
<div class="a" style="left:908px;top:98px;width:32px;height:17.5px;background:#ffffff;"></div>
<div class="a" style="left:768px;top:119.5px;width:189px;height:1px;background:#404040;"></div>
<svg class="a" style="left:800px;top:123.5px;" width="7.5" height="4" viewBox="0 0 7.5 4"><path d="M0 0H7.5L3.75 4Z" fill="#d2d2d2"/></svg>
<svg class="a" style="left:779.5px;top:128.3px;overflow:hidden;" width="49" height="27.5" viewBox="0 0 49 27.5"><rect width="49" height="27.5" fill="#3d7a26"/><ellipse cx="6" cy="8" rx="8" ry="9" fill="#4f9a2c"/><ellipse cx="14" cy="12" rx="4" ry="8" fill="#21492b"/><ellipse cx="40" cy="17" rx="9" ry="10" fill="#3f991f"/><ellipse cx="45" cy="5" rx="5" ry="5" fill="#9dbf40"/><ellipse cx="14" cy="24" rx="14" ry="5" fill="#2a4d1f"/><ellipse cx="29" cy="24" rx="7" ry="4" fill="#6c7c2e"/><ellipse cx="27" cy="3" rx="6" ry="4" fill="#4fa02a"/><rect x="14" y="8.5" width="20.5" height="11.5" fill="#e4e8df"/><rect x="16" y="15.5" width="16.5" height="1.6" fill="#555"/><rect x="20.5" y="0" width="7" height="8" fill="#fff"/></svg>
<div class="a t" style="top:126.80px;font-size:8px;line-height:11px;color:#222;left:603.3px;width:400px;text-align:center;"><span>A</span></div>
<div class="a t" style="top:140.00px;font-size:4.3px;line-height:6px;color:#444;transform:scaleX(0.934);transform-origin:center center;left:604px;width:400px;text-align:center;"><span>BLOOM</span></div>
<div class="a t" style="top:158.50px;font-size:9.3px;line-height:13px;color:#e6e6e6;left:603px;width:400px;text-align:center;"><span>1</span></div>
<svg class="a" style="left:779.5px;top:176.3px;overflow:hidden;" width="49" height="27.5" viewBox="0 0 49 27.5"><rect width="49" height="27.5" fill="#f1f5f2"/><ellipse cx="8" cy="5" rx="10" ry="6" fill="#4a8a30"/><ellipse cx="25" cy="9" rx="9" ry="5" fill="#468f2d"/><ellipse cx="41" cy="5" rx="10" ry="6" fill="#3c7a29"/><rect y="11" width="49" height="3" fill="#7aa860"/><rect y="13.5" width="49" height="5" fill="#34651f"/><path d="M14 14.5H37V18.5H12Z" fill="#c6cbc7"/><rect y="18.5" width="37" height="9" fill="#d3d9d4"/><rect x="37" y="18.5" width="12" height="9" fill="#fff"/><rect x="12" y="18.5" width="0.6" height="9" fill="#dfe87a"/><rect x="24.5" y="18.5" width="0.6" height="9" fill="#dfe87a"/><rect x="36.7" y="18.5" width="0.6" height="9" fill="#dfe87a"/><rect x="39.5" y="22.5" width="7" height="1.6" fill="#555"/><rect x="20.5" y="0" width="7" height="8" fill="#fff"/></svg>
<div class="a t" style="top:174.80px;font-size:8px;line-height:11px;color:#222;left:603.3px;width:400px;text-align:center;"><span>A</span></div>
<div class="a" style="left:798px;top:208.3px;width:9px;height:9.5px;background:#2f7de0;"></div>
<div class="a t" style="top:206.70px;font-size:9.3px;line-height:13px;color:#fff;font-weight:700;left:602.6px;width:400px;text-align:center;"><span>2</span></div>
<svg class="a" style="left:779.5px;top:224.3px;overflow:hidden;" width="49" height="27" viewBox="0 0 49 27"><rect width="49" height="27.5" fill="#fff"/><rect width="49" height="8" fill="#d3dad7"/><rect y="20.5" width="49" height="7" fill="#d3dad7"/><rect x="20" y="12" width="14.5" height="4" fill="#444"/><rect x="38.5" y="12.2" width="6" height="0.8" fill="#666"/><rect x="38.5" y="13.6" width="7" height="0.8" fill="#666"/><rect x="38.5" y="15" width="5" height="0.8" fill="#666"/><rect x="20.5" y="0" width="7" height="8" fill="#fff"/></svg>
<div class="a t" style="top:222.80px;font-size:8px;line-height:11px;color:#222;left:603.3px;width:400px;text-align:center;"><span>A</span></div>
<span class="a t" style="top:235.30px;font-size:4.2px;line-height:6px;color:#333;transform:scaleX(0.820);transform-origin:left center;left:781.5px;">ABOUT US</span>
<div class="a t" style="top:254.20px;font-size:9.3px;line-height:13px;color:#e6e6e6;left:603px;width:400px;text-align:center;"><span>3</span></div>
<span class="a t" style="top:521.70px;font-size:9.3px;line-height:13px;color:#e2e2e2;transform:scaleX(0.802);transform-origin:left center;left:771px;">3 pages de 3 planches</span>
<svg class="a" style="left:885.5px;top:523px;" width="13" height="10" viewBox="0 0 13 10"><path d="M0.5 3.5H6.5V8.5H0.5Z" fill="none" stroke="#cfcfcf" stroke-width="1"/><path d="M3.5 3.2V0.5H8.5L10.5 2.5V8.5H6.8" fill="none" stroke="#cfcfcf" stroke-width="1"/><path d="M0.8 8.2L6.2 3.8" stroke="#cfcfcf" stroke-width="0.8"/><rect x="11.8" y="7.6" width="1.2" height="1.2" fill="#cfcfcf"/></svg>
<svg class="a" style="left:910px;top:523.5px;" width="8" height="8" viewBox="0 0 8 8"><path d="M0 0H8V8H3L0 5Z" fill="#e0e0e0"/><path d="M0 5H3V8" fill="#8a8a8a"/></svg>
<svg class="a" style="left:930.5px;top:522.5px;" width="8" height="9.5" viewBox="0 0 8 9.5"><path d="M0 1.8H8M2.8 1.6V0.4H5.2V1.6" fill="none" stroke="#a2a2a2" stroke-width="0.9"/><rect x="0.9" y="2.6" width="6.2" height="6.5" fill="none" stroke="#a2a2a2" stroke-width="0.9"/><path d="M3 4V8M5 4V8" stroke="#a2a2a2" stroke-width="0.8"/></svg>
<div class="a" style="left:0px;top:536px;width:960px;height:1.7px;background:#3a3a3a;"></div>
<div class="a" style="left:0px;top:537.7px;width:960px;height:2.3px;background:#484848;"></div>
<div class="a" style="left:442px;top:135.5px;width:212px;height:278.5px;background:#f2f2f2;box-shadow:1px 1px 3px rgba(0,0,0,0.45);border:0.5px solid #cfcfcf;"></div>
<span class="a t" style="top:137.70px;font-size:9.3px;line-height:13px;color:#1a1a1a;transform:scaleX(0.831);transform-origin:left center;left:463px;-webkit-text-stroke:0.15px #1a1a1a;">Accéder à la cible</span>
<span class="a t" style="top:149.70px;font-size:9.3px;line-height:13px;color:#1a1a1a;transform:scaleX(0.849);transform-origin:left center;left:463px;-webkit-text-stroke:0.15px #1a1a1a;">Atteindre la première page</span>
<span class="a t" style="top:161.70px;font-size:9.3px;line-height:13px;color:#1a1a1a;transform:scaleX(0.850);transform-origin:left center;left:463px;-webkit-text-stroke:0.15px #1a1a1a;">Atteindre la dernière page</span>
<span class="a t" style="top:173.70px;font-size:9.3px;line-height:13px;color:#1a1a1a;transform:scaleX(0.851);transform-origin:left center;left:463px;-webkit-text-stroke:0.15px #1a1a1a;">Atteindre la page suivante</span>
<span class="a t" style="top:185.70px;font-size:9.3px;line-height:13px;color:#1a1a1a;transform:scaleX(0.850);transform-origin:left center;left:463px;-webkit-text-stroke:0.15px #1a1a1a;">Atteindre la page précédente</span>
<span class="a t" style="top:197.70px;font-size:9.3px;line-height:13px;color:#1a1a1a;transform:scaleX(0.836);transform-origin:left center;left:463px;-webkit-text-stroke:0.15px #1a1a1a;">Atteindre l'URL</span>
<span class="a t" style="top:209.70px;font-size:9.3px;line-height:13px;color:#1a1a1a;transform:scaleX(0.852);transform-origin:left center;left:463px;-webkit-text-stroke:0.15px #1a1a1a;">Afficher/Masquer les boutons et les formulaires</span>
<span class="a t" style="top:221.70px;font-size:9.3px;line-height:13px;color:#1a1a1a;transform:scaleX(0.786);transform-origin:left center;left:463px;-webkit-text-stroke:0.15px #1a1a1a;">Son</span>
<span class="a t" style="top:233.70px;font-size:9.3px;line-height:13px;color:#1a1a1a;transform:scaleX(0.868);transform-origin:left center;left:463px;-webkit-text-stroke:0.15px #1a1a1a;">Vidéo</span>
<span class="a t" style="top:245.70px;font-size:9.3px;line-height:13px;color:#8e8e8e;transform:scaleX(0.812);transform-origin:left center;left:458.3px;">SWF/EPUB uniquement</span>
<span class="a t" style="top:257.70px;font-size:9.3px;line-height:13px;color:#1a1a1a;transform:scaleX(0.871);transform-origin:left center;left:463px;-webkit-text-stroke:0.15px #1a1a1a;">Animation</span>
<span class="a t" style="top:269.70px;font-size:9.3px;line-height:13px;color:#1a1a1a;transform:scaleX(0.854);transform-origin:left center;left:463px;-webkit-text-stroke:0.15px #1a1a1a;">Atteindre la page</span>
<div class="a" style="left:442.5px;top:281.3px;width:211px;height:11.8px;background:#91c9f7;"></div>
<span class="a t" style="top:281.70px;font-size:9.3px;line-height:13px;color:#1a1a1a;transform:scaleX(0.879);transform-origin:left center;left:463px;-webkit-text-stroke:0.15px #1a1a1a;">Atteindre l'état</span>
<span class="a t" style="top:293.70px;font-size:9.3px;line-height:13px;color:#1a1a1a;transform:scaleX(0.866);transform-origin:left center;left:463px;-webkit-text-stroke:0.15px #1a1a1a;">Atteindre l'état suivant</span>
<span class="a t" style="top:305.70px;font-size:9.3px;line-height:13px;color:#1a1a1a;transform:scaleX(0.863);transform-origin:left center;left:463px;-webkit-text-stroke:0.15px #1a1a1a;">Atteindre l'état précédent</span>
<span class="a t" style="top:317.70px;font-size:9.3px;line-height:13px;color:#8e8e8e;transform:scaleX(0.812);transform-origin:left center;left:458.3px;">PDF seulement</span>
<span class="a t" style="top:329.70px;font-size:9.3px;line-height:13px;color:#1a1a1a;transform:scaleX(0.843);transform-origin:left center;left:463px;-webkit-text-stroke:0.15px #1a1a1a;">Effacer le formulaire</span>
<span class="a t" style="top:341.70px;font-size:9.3px;line-height:13px;color:#1a1a1a;transform:scaleX(0.850);transform-origin:left center;left:463px;-webkit-text-stroke:0.15px #1a1a1a;">Atteindre la vue suivante</span>
<span class="a t" style="top:353.70px;font-size:9.3px;line-height:13px;color:#1a1a1a;transform:scaleX(0.849);transform-origin:left center;left:463px;-webkit-text-stroke:0.15px #1a1a1a;">Atteindre la vue précédente</span>
<span class="a t" style="top:365.70px;font-size:9.3px;line-height:13px;color:#1a1a1a;transform:scaleX(0.856);transform-origin:left center;left:463px;-webkit-text-stroke:0.15px #1a1a1a;">Ouvrir le fichier</span>
<span class="a t" style="top:377.70px;font-size:9.3px;line-height:13px;color:#1a1a1a;transform:scaleX(0.863);transform-origin:left center;left:463px;-webkit-text-stroke:0.15px #1a1a1a;">Imprimer le formulaire</span>
<span class="a t" style="top:389.70px;font-size:9.3px;line-height:13px;color:#1a1a1a;transform:scaleX(0.849);transform-origin:left center;left:463px;-webkit-text-stroke:0.15px #1a1a1a;">Soumettre le formulaire</span>
<span class="a t" style="top:401.70px;font-size:9.3px;line-height:13px;color:#1a1a1a;transform:scaleX(0.865);transform-origin:left center;left:463px;-webkit-text-stroke:0.15px #1a1a1a;">Afficher le zoom</span>
<div class="a" style="left:575.6px;top:270.9px;width:31px;height:31px;background:#f7931e;border-radius:50%;"></div>
<div class="a t" style="top:269.50px;font-size:23.5px;line-height:33px;color:#ffffff;transform:scaleX(0.757);transform-origin:center center;left:391.20000000000005px;width:400px;text-align:center;"><span>14</span></div>
</body></html>
